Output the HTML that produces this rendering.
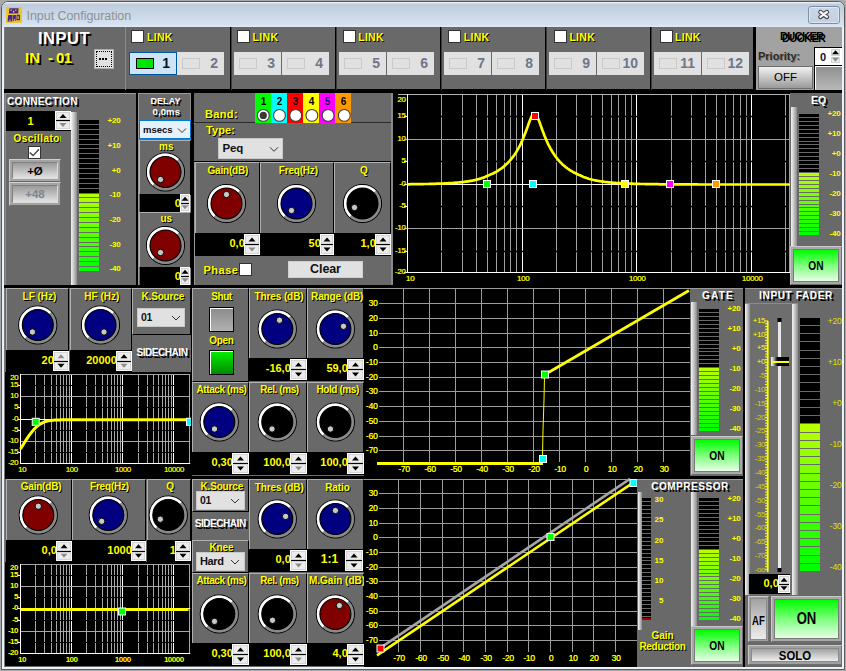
<!DOCTYPE html><html><head><meta charset="utf-8"><style>
*{margin:0;padding:0}
html,body{width:846px;height:671px;overflow:hidden;background:#a9a9a9}
div{position:absolute;box-sizing:border-box}
svg{position:absolute}
</style></head><body><div style="left:1px;top:1px;width:844px;height:669px;background:#eaf2fb;border:1px solid #5a5a5a;border-radius:7px 7px 0 0"></div>
<div style="left:2px;top:2px;width:842px;height:25px;background:linear-gradient(180deg,#e6edf5 0%,#e6edf5 4%,#bdcbdb 8%,#c4d2e1 30%,#d6e2ef 92%,#e2ecf7 100%);border-radius:6px 6px 0 0"></div>
<div style="left:6px;top:7px;width:16px;height:16px;background:#e9c53a"></div>
<svg style="left:0;top:0" width="30" height="30"><g fill="#4a2494"><path d="M9.5,8.2 L18.6,8.2 L18.2,13.6 L8.8,13.6 Z"/><path d="M8.2,15 L12.6,15 L12.2,21.4 L7.6,21.4 Z"/><path d="M13.2,15 L16,15 L15.6,21 L12.8,21 Z"/><path d="M16.6,14.8 L20,14.8 L20,20.2 L16.4,20.2 Z"/></g><g fill="#e9c53a"><rect x="10.5" y="9.5" width="1.6" height="1.2"/><rect x="13" y="10.8" width="1.4" height="1.8"/><rect x="15" y="9.6" width="1.6" height="1"/><rect x="17.6" y="16.2" width="1.2" height="2.8"/><rect x="9.5" y="19.5" width="1" height="2"/><rect x="13.8" y="19" width="1" height="2"/></g></svg>
<div style="left:26.5px;top:7.87px;height:16.5px;font:normal 12.5px/16.5px 'Liberation Sans', sans-serif;color:#8d9098;white-space:nowrap;letter-spacing:-0.05px">Input Configuration</div>
<div style="left:808px;top:6px;width:32px;height:18px;border:1px solid #7f8ea8;border-radius:3px;background:linear-gradient(180deg,#cbd7e6,#c2d0e0);box-shadow:inset 0 0 0 1px rgba(255,255,255,0.45)"></div>
<svg style="left:808px;top:6px" width="32" height="18"><path d="M12.4,6 L18.9,10.9 M18.9,6 L12.4,10.9" stroke="#3a3e48" stroke-width="4.4" stroke-linecap="round"/><path d="M12.4,6 L18.9,10.9 M18.9,6 L12.4,10.9" stroke="#f6f6f6" stroke-width="2.4" stroke-linecap="round"/></svg>
<div style="left:4px;top:27px;width:838px;height:640px;background:#696969"></div>
<div style="left:4px;top:27px;width:1px;height:640px;background:#7a7a7a"></div>
<div style="left:2px;top:667px;width:842px;height:2px;background:#eaf2fb"></div>
<div style="left:4px;top:89px;width:838px;height:4px;background:#000"></div>
<div style="left:38px;top:28.35px;height:20.5px;font:bold 16.5px/20.5px 'Liberation Sans', sans-serif;color:#fff;white-space:nowrap;text-shadow:2px 2px 0 #000;letter-spacing:0.5px">INPUT</div>
<div style="left:25px;top:48.04px;height:19px;font:bold 15px/19px 'Liberation Sans', sans-serif;color:#ffff00;white-space:nowrap;text-shadow:2px 2px 0 #000;">IN</div>
<div style="left:48px;top:48.04px;height:19px;font:bold 15px/19px 'Liberation Sans', sans-serif;color:#ffff00;white-space:nowrap;text-shadow:2px 2px 0 #000;letter-spacing:-0.6px">- 01</div>
<div style="left:94px;top:49px;width:20px;height:20px;background:#e1e1e1;border:1px solid #adadad"></div>
<div style="left:96px;top:51px;width:16px;height:16px;border:1px dotted #000"></div>
<svg style="left:94px;top:49px" width="20" height="20"><rect x="5" y="9" width="2" height="2" fill="#000"/><rect x="8" y="9" width="2" height="2" fill="#000"/><rect x="11" y="9" width="2" height="2" fill="#000"/></svg>
<div style="left:125px;top:27px;width:1px;height:63px;background:#8a8a8a"></div>
<div style="left:131px;top:30px;width:13px;height:13px;background:#fff;border:1px solid #333"></div>
<div style="left:147.0px;top:29.63px;height:14.5px;font:bold 10.5px/14.5px 'Liberation Sans', sans-serif;color:#ffff00;white-space:nowrap;text-shadow:1px 1px 0 #000;letter-spacing:0.3px">LINK</div>
<div style="left:129px;top:52px;width:48px;height:23px;background:#cce4f7;border:1px solid #005499"></div>
<div style="left:136px;top:58px;width:18px;height:11px;background:#00e600;border:1px solid #000"></div>
<div style="left:-30px;width:200px;text-align:right;top:54.17px;height:18px;font:bold 14px/18px 'Liberation Sans', sans-serif;color:#10101e;white-space:nowrap;">1</div>
<div style="left:177px;top:52px;width:47px;height:23px;background:#e1e1e1"></div>
<div style="left:182px;top:58px;width:18px;height:11px;border:1px solid #c9c9c9"></div>
<div style="left:18px;width:200px;text-align:right;top:54.17px;height:18px;font:bold 14px/18px 'Liberation Sans', sans-serif;color:#6e7788;white-space:nowrap;">2</div>
<div style="left:230px;top:27px;width:1px;height:63px;background:#000"></div>
<div style="left:231px;top:27px;width:1px;height:63px;background:#3a3a3a"></div>
<div style="left:237px;top:30px;width:13px;height:13px;background:#fff;border:1px solid #333"></div>
<div style="left:252.6px;top:29.63px;height:14.5px;font:bold 10.5px/14.5px 'Liberation Sans', sans-serif;color:#ffff00;white-space:nowrap;text-shadow:1px 1px 0 #000;letter-spacing:0.3px">LINK</div>
<div style="left:234px;top:52px;width:47px;height:23px;background:#e1e1e1"></div>
<div style="left:239px;top:58px;width:18px;height:11px;border:1px solid #c9c9c9"></div>
<div style="left:75px;width:200px;text-align:right;top:54.17px;height:18px;font:bold 14px/18px 'Liberation Sans', sans-serif;color:#6e7788;white-space:nowrap;">3</div>
<div style="left:282px;top:52px;width:47px;height:23px;background:#e1e1e1"></div>
<div style="left:287px;top:58px;width:18px;height:11px;border:1px solid #c9c9c9"></div>
<div style="left:123px;width:200px;text-align:right;top:54.17px;height:18px;font:bold 14px/18px 'Liberation Sans', sans-serif;color:#6e7788;white-space:nowrap;">4</div>
<div style="left:335px;top:27px;width:1px;height:63px;background:#000"></div>
<div style="left:336px;top:27px;width:1px;height:63px;background:#3a3a3a"></div>
<div style="left:343px;top:30px;width:13px;height:13px;background:#fff;border:1px solid #333"></div>
<div style="left:358.2px;top:29.63px;height:14.5px;font:bold 10.5px/14.5px 'Liberation Sans', sans-serif;color:#ffff00;white-space:nowrap;text-shadow:1px 1px 0 #000;letter-spacing:0.3px">LINK</div>
<div style="left:339px;top:52px;width:47px;height:23px;background:#e1e1e1"></div>
<div style="left:344px;top:58px;width:18px;height:11px;border:1px solid #c9c9c9"></div>
<div style="left:180px;width:200px;text-align:right;top:54.17px;height:18px;font:bold 14px/18px 'Liberation Sans', sans-serif;color:#6e7788;white-space:nowrap;">5</div>
<div style="left:387px;top:52px;width:47px;height:23px;background:#e1e1e1"></div>
<div style="left:392px;top:58px;width:18px;height:11px;border:1px solid #c9c9c9"></div>
<div style="left:228px;width:200px;text-align:right;top:54.17px;height:18px;font:bold 14px/18px 'Liberation Sans', sans-serif;color:#6e7788;white-space:nowrap;">6</div>
<div style="left:440px;top:27px;width:1px;height:63px;background:#000"></div>
<div style="left:441px;top:27px;width:1px;height:63px;background:#3a3a3a"></div>
<div style="left:448px;top:30px;width:13px;height:13px;background:#fff;border:1px solid #333"></div>
<div style="left:463.79999999999995px;top:29.63px;height:14.5px;font:bold 10.5px/14.5px 'Liberation Sans', sans-serif;color:#ffff00;white-space:nowrap;text-shadow:1px 1px 0 #000;letter-spacing:0.3px">LINK</div>
<div style="left:444px;top:52px;width:47px;height:23px;background:#e1e1e1"></div>
<div style="left:449px;top:58px;width:18px;height:11px;border:1px solid #c9c9c9"></div>
<div style="left:285px;width:200px;text-align:right;top:54.17px;height:18px;font:bold 14px/18px 'Liberation Sans', sans-serif;color:#6e7788;white-space:nowrap;">7</div>
<div style="left:492px;top:52px;width:47px;height:23px;background:#e1e1e1"></div>
<div style="left:497px;top:58px;width:18px;height:11px;border:1px solid #c9c9c9"></div>
<div style="left:333px;width:200px;text-align:right;top:54.17px;height:18px;font:bold 14px/18px 'Liberation Sans', sans-serif;color:#6e7788;white-space:nowrap;">8</div>
<div style="left:545px;top:27px;width:1px;height:63px;background:#000"></div>
<div style="left:546px;top:27px;width:1px;height:63px;background:#3a3a3a"></div>
<div style="left:554px;top:30px;width:13px;height:13px;background:#fff;border:1px solid #333"></div>
<div style="left:569.4px;top:29.63px;height:14.5px;font:bold 10.5px/14.5px 'Liberation Sans', sans-serif;color:#ffff00;white-space:nowrap;text-shadow:1px 1px 0 #000;letter-spacing:0.3px">LINK</div>
<div style="left:549px;top:52px;width:47px;height:23px;background:#e1e1e1"></div>
<div style="left:554px;top:58px;width:18px;height:11px;border:1px solid #c9c9c9"></div>
<div style="left:390px;width:200px;text-align:right;top:54.17px;height:18px;font:bold 14px/18px 'Liberation Sans', sans-serif;color:#6e7788;white-space:nowrap;">9</div>
<div style="left:597px;top:52px;width:47px;height:23px;background:#e1e1e1"></div>
<div style="left:602px;top:58px;width:18px;height:11px;border:1px solid #c9c9c9"></div>
<div style="left:438px;width:200px;text-align:right;top:54.17px;height:18px;font:bold 14px/18px 'Liberation Sans', sans-serif;color:#6e7788;white-space:nowrap;">10</div>
<div style="left:650px;top:27px;width:1px;height:63px;background:#000"></div>
<div style="left:651px;top:27px;width:1px;height:63px;background:#3a3a3a"></div>
<div style="left:660px;top:30px;width:13px;height:13px;background:#fff;border:1px solid #333"></div>
<div style="left:675.0px;top:29.63px;height:14.5px;font:bold 10.5px/14.5px 'Liberation Sans', sans-serif;color:#ffff00;white-space:nowrap;text-shadow:1px 1px 0 #000;letter-spacing:0.3px">LINK</div>
<div style="left:654px;top:52px;width:47px;height:23px;background:#e1e1e1"></div>
<div style="left:659px;top:58px;width:18px;height:11px;border:1px solid #c9c9c9"></div>
<div style="left:495px;width:200px;text-align:right;top:54.17px;height:18px;font:bold 14px/18px 'Liberation Sans', sans-serif;color:#6e7788;white-space:nowrap;">11</div>
<div style="left:702px;top:52px;width:47px;height:23px;background:#e1e1e1"></div>
<div style="left:707px;top:58px;width:18px;height:11px;border:1px solid #c9c9c9"></div>
<div style="left:543px;width:200px;text-align:right;top:54.17px;height:18px;font:bold 14px/18px 'Liberation Sans', sans-serif;color:#6e7788;white-space:nowrap;">12</div>
<div style="left:753px;top:27px;width:3px;height:63px;background:#000"></div>
<div style="left:756px;top:27px;width:86px;height:63px;background:#a2a2a2"></div>
<div style="left:780px;top:28.56px;height:15px;font:bold 11px/15px 'Liberation Sans', sans-serif;color:#000;white-space:nowrap;text-shadow:2px 2px 0 #000;letter-spacing:-0.6px">DUCKER</div>
<div style="left:758px;top:49.06px;height:15px;font:bold 11px/15px 'Liberation Sans', sans-serif;color:#2a2a2a;white-space:nowrap;text-shadow:1px 1px 0 rgba(0,0,0,0.25);">Priority:</div>
<div style="left:814px;top:47px;width:28px;height:18px;background:#fff;border-top:1px solid #000;border-left:1px solid #000"></div>
<div style="left:820px;top:50.06px;height:15px;font:bold 11px/15px 'Liberation Sans', sans-serif;color:#101030;white-space:nowrap;">0</div>
<div style="left:830px;top:48px;width:11px;height:16px;background:#fff"></div>
<div style="left:831px;top:49.0px;width:9px;height:6.5px;background:#ececec;border:1px solid #d4d4d4"></div>
<svg style="position:absolute;left:0;top:0;overflow:visible" width="1" height="1"><polygon points="832.0,54.25 839.0,54.25 835.5,50.25" fill="#000"/></svg>
<div style="left:831px;top:56.5px;width:9px;height:6.5px;background:#ececec;border:1px solid #d4d4d4"></div>
<svg style="position:absolute;left:0;top:0;overflow:visible" width="1" height="1"><polygon points="832.0,57.75 839.0,57.75 835.5,61.75" fill="#8c8c8c"/></svg>
<div style="left:758px;top:66px;width:55px;height:23px;background:linear-gradient(180deg,#f2f2f2,#9a9a9a);border:1px solid #6e6e6e"></div>
<div style="left:760.5px;width:50px;text-align:center;top:69.8px;height:15.5px;font:normal 11.5px/15.5px 'Liberation Sans', sans-serif;color:#000;white-space:nowrap;">OFF</div>
<div style="left:814px;top:65px;width:28px;height:25px;background:linear-gradient(180deg,#8e8e8e,#b8b8b8);border-top:1px solid #000;border-left:1px solid #000;box-shadow:inset 1px 1px 0 #fff"></div>
<div style="left:5px;top:93px;width:131px;height:192px;background:#696969;border-top:1px solid #9a9a9a;border-left:1px solid #8a8a8a"></div>
<div style="left:7px;top:95.0px;height:14px;font:bold 10px/14px 'Liberation Sans', sans-serif;color:#fff;white-space:nowrap;text-shadow:2px 2px 0 #000;letter-spacing:0.35px">CONNECTION</div>
<div style="left:6px;top:111px;width:49px;height:20px;background:#000"></div>
<div style="left:55px;top:111px;width:16px;height:20px;background:#000"></div>
<div style="left:20.5px;width:20px;text-align:center;top:113.56px;height:15px;font:bold 11px/15px 'Liberation Sans', sans-serif;color:#ffff00;white-space:nowrap;">1</div>
<div style="left:55px;top:111px;width:16px;height:19px;background:#fff"></div>
<div style="left:56px;top:112.0px;width:14px;height:8.0px;background:#ececec;border:1px solid #d4d4d4"></div>
<svg style="position:absolute;left:0;top:0;overflow:visible" width="1" height="1"><polygon points="59.5,118.0 66.5,118.0 63.0,114.0" fill="#000"/></svg>
<div style="left:56px;top:121.0px;width:14px;height:8.0px;background:#ececec;border:1px solid #d4d4d4"></div>
<svg style="position:absolute;left:0;top:0;overflow:visible" width="1" height="1"><polygon points="59.5,123.0 66.5,123.0 63.0,127.0" fill="#8c8c8c"/></svg>
<div style="left:56px;top:120.0px;width:14px;height:1px;background:#000"></div>
<div style="left:71px;top:112px;width:6px;height:173px;background:linear-gradient(90deg,#f4f4f4 0%,#d8d8d8 30%,#8a8a8a 100%)"></div>
<div style="left:79px;top:120px;width:20px;height:4px;background:#000"></div>
<div style="left:79px;top:125px;width:20px;height:4px;background:#000"></div>
<div style="left:79px;top:130px;width:20px;height:4px;background:#000"></div>
<div style="left:79px;top:135px;width:20px;height:4px;background:#000"></div>
<div style="left:79px;top:140px;width:20px;height:4px;background:#000"></div>
<div style="left:79px;top:145px;width:20px;height:3px;background:#000"></div>
<div style="left:79px;top:149px;width:20px;height:4px;background:#000"></div>
<div style="left:79px;top:154px;width:20px;height:4px;background:#000"></div>
<div style="left:79px;top:159px;width:20px;height:4px;background:#000"></div>
<div style="left:79px;top:164px;width:20px;height:4px;background:#000"></div>
<div style="left:79px;top:169px;width:20px;height:4px;background:#000"></div>
<div style="left:79px;top:174px;width:20px;height:4px;background:#000"></div>
<div style="left:79px;top:179px;width:20px;height:4px;background:#000"></div>
<div style="left:79px;top:184px;width:20px;height:4px;background:#000"></div>
<div style="left:79px;top:189px;width:20px;height:4px;background:#000"></div>
<div style="left:79px;top:194px;width:20px;height:3px;background:rgb(184,255,0)"></div>
<div style="left:79px;top:198px;width:20px;height:4px;background:rgb(171,255,0)"></div>
<div style="left:79px;top:203px;width:20px;height:4px;background:rgb(159,255,0)"></div>
<div style="left:79px;top:208px;width:20px;height:4px;background:rgb(147,255,0)"></div>
<div style="left:79px;top:213px;width:20px;height:4px;background:rgb(134,255,0)"></div>
<div style="left:79px;top:218px;width:20px;height:4px;background:rgb(122,255,0)"></div>
<div style="left:79px;top:223px;width:20px;height:4px;background:rgb(110,255,0)"></div>
<div style="left:79px;top:228px;width:20px;height:4px;background:rgb(98,255,0)"></div>
<div style="left:79px;top:233px;width:20px;height:4px;background:rgb(85,255,0)"></div>
<div style="left:79px;top:238px;width:20px;height:4px;background:rgb(73,255,0)"></div>
<div style="left:79px;top:243px;width:20px;height:3px;background:rgb(61,255,0)"></div>
<div style="left:79px;top:247px;width:20px;height:4px;background:rgb(49,255,0)"></div>
<div style="left:79px;top:252px;width:20px;height:4px;background:rgb(36,255,0)"></div>
<div style="left:79px;top:257px;width:20px;height:4px;background:rgb(24,255,0)"></div>
<div style="left:79px;top:262px;width:20px;height:4px;background:rgb(12,255,0)"></div>
<div style="left:79px;top:267px;width:20px;height:4px;background:rgb(0,255,0)"></div>
<div style="left:-79.5px;width:200px;text-align:right;top:115.25999999999999px;height:12px;font:bold 8px/12px 'Liberation Sans', sans-serif;color:#ffff00;white-space:nowrap;letter-spacing:-0.2px">+20</div>
<div style="left:-79.5px;width:200px;text-align:right;top:139.96px;height:12px;font:bold 8px/12px 'Liberation Sans', sans-serif;color:#ffff00;white-space:nowrap;letter-spacing:-0.2px">+10</div>
<div style="left:-79.5px;width:200px;text-align:right;top:164.66px;height:12px;font:bold 8px/12px 'Liberation Sans', sans-serif;color:#ffff00;white-space:nowrap;letter-spacing:-0.2px">+0</div>
<div style="left:-79.5px;width:200px;text-align:right;top:189.35999999999999px;height:12px;font:bold 8px/12px 'Liberation Sans', sans-serif;color:#ffff00;white-space:nowrap;letter-spacing:-0.2px">-10</div>
<div style="left:-79.5px;width:200px;text-align:right;top:214.06px;height:12px;font:bold 8px/12px 'Liberation Sans', sans-serif;color:#ffff00;white-space:nowrap;letter-spacing:-0.2px">-20</div>
<div style="left:-79.5px;width:200px;text-align:right;top:238.76000000000002px;height:12px;font:bold 8px/12px 'Liberation Sans', sans-serif;color:#ffff00;white-space:nowrap;letter-spacing:-0.2px">-30</div>
<div style="left:-79.5px;width:200px;text-align:right;top:263.46px;height:12px;font:bold 8px/12px 'Liberation Sans', sans-serif;color:#ffff00;white-space:nowrap;letter-spacing:-0.2px">-40</div>
<div style="left:13px;top:131px;width:48px;height:15px;overflow:hidden">
<div style="left:0.5px;top:1.2000000000000002px;height:14px;font:bold 10px/14px 'Liberation Sans', sans-serif;color:#ffff00;white-space:nowrap;text-shadow:1px 1px 0 #000;letter-spacing:0.45px">Oscillator</div>
</div>
<div style="left:28px;top:146px;width:13px;height:13px;background:#fff;border:1px solid #333"></div>
<svg style="left:28px;top:146px" width="13" height="13"><path d="M1.8,6.4 L5.1,9.6 L11,3.2" stroke="#444" stroke-width="1.4" fill="none"/></svg>
<div style="left:9px;top:159px;width:52px;height:23px;background:#a4a4a4;border:1px solid #cfcfcf;border-right-color:#6a6a6a;border-bottom-color:#6a6a6a"></div>
<div style="left:12px;top:162px;width:46px;height:17px;background:linear-gradient(180deg,#9a9a9a,#e2e2e2);border:1px solid #808080;border-right-color:#dadada;border-bottom-color:#dadada"></div>
<div style="left:-1.0px;width:72px;text-align:center;top:163.5px;height:15.5px;font:bold 11.5px/15.5px 'Liberation Sans', sans-serif;color:#000;white-space:nowrap;letter-spacing:0px">+&Oslash;</div>
<div style="left:9px;top:182px;width:52px;height:24px;background:#a4a4a4;border:1px solid #cfcfcf;border-right-color:#6a6a6a;border-bottom-color:#6a6a6a"></div>
<div style="left:12px;top:185px;width:46px;height:18px;background:linear-gradient(180deg,#9a9a9a,#e2e2e2);border:1px solid #808080;border-right-color:#dadada;border-bottom-color:#dadada"></div>
<div style="left:-1.0px;width:72px;text-align:center;top:186.7px;height:15.5px;font:bold 11.5px/15.5px 'Liberation Sans', sans-serif;color:#7c8490;white-space:nowrap;letter-spacing:0px">+48</div>
<div style="left:136px;top:93px;width:2px;height:192px;background:#000"></div>
<div style="left:138px;top:93px;width:53px;height:192px;background:#696969;border-top:1px solid #9a9a9a;border-left:1px solid #9a9a9a;border-right:1px solid #8a8a8a"></div>
<div style="left:191px;top:93px;width:3px;height:192px;background:#000"></div>
<div style="left:140.5px;width:50px;text-align:center;top:94.83px;height:13px;font:bold 9px/13px 'Liberation Sans', sans-serif;color:#fff;white-space:nowrap;text-shadow:1.5px 1.5px 0 #000;letter-spacing:0.1px">DELAY</div>
<div style="left:141.3px;width:50px;text-align:center;top:105.26px;height:13.5px;font:bold 9.5px/13.5px 'Liberation Sans', sans-serif;color:#fff;white-space:nowrap;text-shadow:1.5px 1.5px 0 #000;letter-spacing:0.1px">0,0ms</div>
<div style="left:139px;top:120px;width:52px;height:19px;background:#e5f1fb;border:1px solid #0078d7"></div>
<div style="left:143px;top:123.26px;height:13.5px;font:bold 9.5px/13.5px 'Liberation Sans', sans-serif;color:#0a0a20;white-space:nowrap;letter-spacing:0px">msecs</div>
<svg style="left:139px;top:120px" width="52" height="19"><path d="M39,8.5 L43,12.5 L47,8.5" stroke="#333" stroke-width="1" fill="none"/></svg>
<div style="left:139px;top:140px;width:52px;height:55px;background:#696969;border-top:1px solid #b0b0b0;border-left:1px solid #b0b0b0;border-right:1px solid #000;border-bottom:1px solid #000"></div>
<div style="left:146.3px;width:40px;text-align:center;top:139.5px;height:14px;font:bold 10px/14px 'Liberation Sans', sans-serif;color:#ffff00;white-space:nowrap;text-shadow:1px 1px 0 #000;">ms</div>
<svg style="position:absolute;left:0;top:0;overflow:visible" width="1" height="1"><circle cx="165.5" cy="172" r="19" fill="none" stroke="#000" stroke-width="1.2"/><circle cx="165.5" cy="172" r="17.1" fill="none" stroke="#8a8a8a" stroke-width="3"/><path d="M153.62,184.30 A17.1,17.1 0 1 1 177.80,160.12" fill="none" stroke="#fff" stroke-width="3"/><circle cx="165.5" cy="172" r="15.5" fill="#800000" stroke="#000" stroke-width="1.1"/><circle cx="160.5" cy="179.5" r="3.2" fill="#c8c8c8" stroke="#000" stroke-width="1"/></svg>
<div style="left:140px;top:194px;width:50px;height:18px;background:#000"></div>
<div style="left:-19.19999999999999px;width:200px;text-align:right;top:195.56px;height:15px;font:bold 11px/15px 'Liberation Sans', sans-serif;color:#ffff00;white-space:nowrap;letter-spacing:0px">0</div>
<div style="left:180px;top:194px;width:10px;height:18px;background:#fff"></div>
<div style="left:181px;top:195.0px;width:8px;height:7.5px;background:#ececec;border:1px solid #d4d4d4"></div>
<svg style="position:absolute;left:0;top:0;overflow:visible" width="1" height="1"><polygon points="181.5,200.75 188.5,200.75 185.0,196.75" fill="#000"/></svg>
<div style="left:181px;top:203.5px;width:8px;height:7.5px;background:#ececec;border:1px solid #d4d4d4"></div>
<svg style="position:absolute;left:0;top:0;overflow:visible" width="1" height="1"><polygon points="181.5,205.25 188.5,205.25 185.0,209.25" fill="#8c8c8c"/></svg>
<div style="left:181px;top:202.5px;width:8px;height:1px;background:#000"></div>
<div style="left:139px;top:212px;width:52px;height:56px;background:#696969;border-top:1px solid #b0b0b0;border-left:1px solid #b0b0b0;border-right:1px solid #000;border-bottom:1px solid #000"></div>
<div style="left:146.3px;width:40px;text-align:center;top:211.7px;height:14px;font:bold 10px/14px 'Liberation Sans', sans-serif;color:#ffff00;white-space:nowrap;text-shadow:1px 1px 0 #000;">us</div>
<svg style="position:absolute;left:0;top:0;overflow:visible" width="1" height="1"><circle cx="165.5" cy="245.5" r="19" fill="none" stroke="#000" stroke-width="1.2"/><circle cx="165.5" cy="245.5" r="17.1" fill="none" stroke="#8a8a8a" stroke-width="3"/><path d="M153.62,257.80 A17.1,17.1 0 1 1 177.80,233.62" fill="none" stroke="#fff" stroke-width="3"/><circle cx="165.5" cy="245.5" r="15.5" fill="#800000" stroke="#000" stroke-width="1.1"/><circle cx="160.5" cy="252.5" r="3.2" fill="#c8c8c8" stroke="#000" stroke-width="1"/></svg>
<div style="left:140px;top:267px;width:50px;height:18px;background:#000"></div>
<div style="left:-19.19999999999999px;width:200px;text-align:right;top:268.56px;height:15px;font:bold 11px/15px 'Liberation Sans', sans-serif;color:#ffff00;white-space:nowrap;letter-spacing:0px">0</div>
<div style="left:180px;top:267px;width:10px;height:18px;background:#fff"></div>
<div style="left:181px;top:268.0px;width:8px;height:7.5px;background:#ececec;border:1px solid #d4d4d4"></div>
<svg style="position:absolute;left:0;top:0;overflow:visible" width="1" height="1"><polygon points="181.5,273.75 188.5,273.75 185.0,269.75" fill="#000"/></svg>
<div style="left:181px;top:276.5px;width:8px;height:7.5px;background:#ececec;border:1px solid #d4d4d4"></div>
<svg style="position:absolute;left:0;top:0;overflow:visible" width="1" height="1"><polygon points="181.5,278.25 188.5,278.25 185.0,282.25" fill="#8c8c8c"/></svg>
<div style="left:181px;top:275.5px;width:8px;height:1px;background:#000"></div>
<div style="left:194px;top:93px;width:198px;height:192px;background:#696969;border-left:1px solid #9a9a9a;border-right:1px solid #8a8a8a"></div>
<div style="left:194px;top:93px;width:197px;height:30px;background:#696969;border-bottom:1px solid #2a2a2a"></div>
<div style="left:205px;top:107.06px;height:15px;font:bold 11px/15px 'Liberation Sans', sans-serif;color:#ffff00;white-space:nowrap;text-shadow:1px 1px 0 #000;letter-spacing:0.35px">Band:</div>
<div style="left:255px;top:93px;width:16px;height:30px;background:#00ff00"></div>
<div style="left:255.5px;width:16px;text-align:center;top:95.0px;height:14px;font:bold 10px/14px 'Liberation Sans', sans-serif;color:#000;white-space:nowrap;">1</div>
<svg style="left:255px;top:109px" width="18" height="14" overflow="visible"><circle cx="8.30" cy="6.4" r="5.9" fill="#fff" stroke="#404040" stroke-width="1.1"/><circle cx="8.30" cy="6.4" r="3.6" fill="#383838"/></svg>
<div style="left:271px;top:93px;width:16px;height:30px;background:#00ffff"></div>
<div style="left:271.5px;width:16px;text-align:center;top:95.0px;height:14px;font:bold 10px/14px 'Liberation Sans', sans-serif;color:#000;white-space:nowrap;">2</div>
<svg style="left:271px;top:109px" width="18" height="14" overflow="visible"><circle cx="8.50" cy="6.4" r="5.9" fill="#fff" stroke="#404040" stroke-width="1.1"/></svg>
<div style="left:287px;top:93px;width:16px;height:30px;background:#ff0000"></div>
<div style="left:287.5px;width:16px;text-align:center;top:95.0px;height:14px;font:bold 10px/14px 'Liberation Sans', sans-serif;color:#000;white-space:nowrap;">3</div>
<svg style="left:287px;top:109px" width="18" height="14" overflow="visible"><circle cx="8.70" cy="6.4" r="5.9" fill="#fff" stroke="#404040" stroke-width="1.1"/></svg>
<div style="left:303px;top:93px;width:16px;height:30px;background:#ffff00"></div>
<div style="left:303.5px;width:16px;text-align:center;top:95.0px;height:14px;font:bold 10px/14px 'Liberation Sans', sans-serif;color:#000;white-space:nowrap;">4</div>
<svg style="left:303px;top:109px" width="18" height="14" overflow="visible"><circle cx="8.90" cy="6.4" r="5.9" fill="#fff" stroke="#404040" stroke-width="1.1"/></svg>
<div style="left:319px;top:93px;width:16px;height:30px;background:#ff00ff"></div>
<div style="left:319.5px;width:16px;text-align:center;top:95.0px;height:14px;font:bold 10px/14px 'Liberation Sans', sans-serif;color:#10106a;white-space:nowrap;">5</div>
<svg style="left:319px;top:109px" width="18" height="14" overflow="visible"><circle cx="9.10" cy="6.4" r="5.9" fill="#fff" stroke="#404040" stroke-width="1.1"/></svg>
<div style="left:335px;top:93px;width:16px;height:30px;background:#ff9900"></div>
<div style="left:335.5px;width:16px;text-align:center;top:95.0px;height:14px;font:bold 10px/14px 'Liberation Sans', sans-serif;color:#000;white-space:nowrap;">6</div>
<svg style="left:335px;top:109px" width="18" height="14" overflow="visible"><circle cx="9.30" cy="6.4" r="5.9" fill="#fff" stroke="#404040" stroke-width="1.1"/></svg>
<div style="left:194px;top:124px;width:197px;height:38px;background:#696969;border-bottom:1px solid #000"></div>
<div style="left:206px;top:123.06px;height:15px;font:bold 11px/15px 'Liberation Sans', sans-serif;color:#ffff00;white-space:nowrap;text-shadow:1px 1px 0 #000;letter-spacing:0.1px">Type:</div>
<div style="left:218px;top:138px;width:65px;height:21px;background:#e1e1e1;border:1px solid #c9c9c9"></div>
<div style="left:222.5px;top:141.3px;height:15.5px;font:bold 11.5px/15.5px 'Liberation Sans', sans-serif;color:#111;white-space:nowrap;letter-spacing:-0.2px">Peq</div>
<svg style="left:218px;top:138px" width="65" height="21"><path d="M52,9.3 L56,13.3 L60,9.3" stroke="#333" stroke-width="1" fill="none"/></svg>
<div style="left:195px;top:162px;width:65px;height:72px;background:#696969;border-top:1px solid #b0b0b0;border-left:1px solid #b0b0b0;border-right:1px solid #000;border-bottom:1px solid #000"></div>
<div style="left:187.8px;width:80px;text-align:center;top:164.2px;height:14px;font:bold 10px/14px 'Liberation Sans', sans-serif;color:#ffff00;white-space:nowrap;text-shadow:1px 1px 0 #000;letter-spacing:-0.2px">Gain(dB)</div>
<svg style="position:absolute;left:0;top:0;overflow:visible" width="1" height="1"><circle cx="226.5" cy="203.5" r="19" fill="none" stroke="#000" stroke-width="1.2"/><circle cx="226.5" cy="203.5" r="17.1" fill="none" stroke="#8a8a8a" stroke-width="3"/><path d="M214.62,215.80 A17.1,17.1 0 1 1 238.80,191.62" fill="none" stroke="#fff" stroke-width="3"/><circle cx="226.5" cy="203.5" r="15.5" fill="#800000" stroke="#000" stroke-width="1.1"/><circle cx="226.5" cy="194.5" r="3.2" fill="#c8c8c8" stroke="#000" stroke-width="1"/></svg>
<div style="left:195px;top:233px;width:65px;height:23px;background:#000"></div>
<div style="left:44.80000000000001px;width:200px;text-align:right;top:236.06px;height:15px;font:bold 11px/15px 'Liberation Sans', sans-serif;color:#ffff00;white-space:nowrap;letter-spacing:0px">0,0</div>
<div style="left:244px;top:234px;width:16px;height:21px;background:#fff"></div>
<div style="left:245px;top:235.0px;width:14px;height:9.0px;background:#ececec;border:1px solid #d4d4d4"></div>
<svg style="position:absolute;left:0;top:0;overflow:visible" width="1" height="1"><polygon points="248.5,241.5 255.5,241.5 252.0,237.5" fill="#000"/></svg>
<div style="left:245px;top:245.0px;width:14px;height:9.0px;background:#ececec;border:1px solid #d4d4d4"></div>
<svg style="position:absolute;left:0;top:0;overflow:visible" width="1" height="1"><polygon points="248.5,247.5 255.5,247.5 252.0,251.5" fill="#8c8c8c"/></svg>
<div style="left:245px;top:244.0px;width:14px;height:1px;background:#000"></div>
<div style="left:260px;top:162px;width:74px;height:72px;background:#696969;border-top:1px solid #b0b0b0;border-left:1px solid #b0b0b0;border-right:1px solid #000;border-bottom:1px solid #000"></div>
<div style="left:258.3px;width:80px;text-align:center;top:164.2px;height:14px;font:bold 10px/14px 'Liberation Sans', sans-serif;color:#ffff00;white-space:nowrap;text-shadow:1px 1px 0 #000;letter-spacing:-0.2px">Freq(Hz)</div>
<svg style="position:absolute;left:0;top:0;overflow:visible" width="1" height="1"><circle cx="296.5" cy="203.5" r="19" fill="none" stroke="#000" stroke-width="1.2"/><circle cx="296.5" cy="203.5" r="17.1" fill="none" stroke="#8a8a8a" stroke-width="3"/><path d="M284.62,215.80 A17.1,17.1 0 1 1 308.80,191.62" fill="none" stroke="#fff" stroke-width="3"/><circle cx="296.5" cy="203.5" r="15.5" fill="#000080" stroke="#000" stroke-width="1.1"/><circle cx="291.5" cy="210.5" r="3.2" fill="#c8c8c8" stroke="#000" stroke-width="1"/></svg>
<div style="left:260px;top:233px;width:74px;height:23px;background:#000"></div>
<div style="left:120.80000000000001px;width:200px;text-align:right;top:236.06px;height:15px;font:bold 11px/15px 'Liberation Sans', sans-serif;color:#ffff00;white-space:nowrap;letter-spacing:0px">50</div>
<div style="left:320px;top:234px;width:14px;height:21px;background:#fff"></div>
<div style="left:321px;top:235.0px;width:12px;height:9.0px;background:#ececec;border:1px solid #d4d4d4"></div>
<svg style="position:absolute;left:0;top:0;overflow:visible" width="1" height="1"><polygon points="323.5,241.5 330.5,241.5 327.0,237.5" fill="#000"/></svg>
<div style="left:321px;top:245.0px;width:12px;height:9.0px;background:#ececec;border:1px solid #d4d4d4"></div>
<svg style="position:absolute;left:0;top:0;overflow:visible" width="1" height="1"><polygon points="323.5,247.5 330.5,247.5 327.0,251.5" fill="#000"/></svg>
<div style="left:321px;top:244.0px;width:12px;height:1px;background:#000"></div>
<div style="left:334px;top:162px;width:57px;height:72px;background:#696969;border-top:1px solid #b0b0b0;border-left:1px solid #b0b0b0;border-right:1px solid #000;border-bottom:1px solid #000"></div>
<div style="left:323.8px;width:80px;text-align:center;top:164.2px;height:14px;font:bold 10px/14px 'Liberation Sans', sans-serif;color:#ffff00;white-space:nowrap;text-shadow:1px 1px 0 #000;letter-spacing:-0.2px">Q</div>
<svg style="position:absolute;left:0;top:0;overflow:visible" width="1" height="1"><circle cx="362.5" cy="203.5" r="19" fill="none" stroke="#000" stroke-width="1.2"/><circle cx="362.5" cy="203.5" r="17.1" fill="none" stroke="#8a8a8a" stroke-width="3"/><path d="M350.62,215.80 A17.1,17.1 0 1 1 374.80,191.62" fill="none" stroke="#fff" stroke-width="3"/><circle cx="362.5" cy="203.5" r="15.5" fill="#000" stroke="#000" stroke-width="1.1"/><circle cx="354.5" cy="207.5" r="3.2" fill="#c8c8c8" stroke="#000" stroke-width="1"/></svg>
<div style="left:334px;top:233px;width:57px;height:23px;background:#000"></div>
<div style="left:175.8px;width:200px;text-align:right;top:236.06px;height:15px;font:bold 11px/15px 'Liberation Sans', sans-serif;color:#ffff00;white-space:nowrap;letter-spacing:0px">1,0</div>
<div style="left:375px;top:234px;width:16px;height:21px;background:#fff"></div>
<div style="left:376px;top:235.0px;width:14px;height:9.0px;background:#ececec;border:1px solid #d4d4d4"></div>
<svg style="position:absolute;left:0;top:0;overflow:visible" width="1" height="1"><polygon points="379.5,241.5 386.5,241.5 383.0,237.5" fill="#000"/></svg>
<div style="left:376px;top:245.0px;width:14px;height:9.0px;background:#ececec;border:1px solid #d4d4d4"></div>
<svg style="position:absolute;left:0;top:0;overflow:visible" width="1" height="1"><polygon points="379.5,247.5 386.5,247.5 383.0,251.5" fill="#000"/></svg>
<div style="left:376px;top:244.0px;width:14px;height:1px;background:#000"></div>
<div style="left:203.5px;top:262.56px;height:15px;font:bold 11px/15px 'Liberation Sans', sans-serif;color:#ffff00;white-space:nowrap;text-shadow:1px 1px 0 #000;letter-spacing:0.5px">Phase</div>
<div style="left:239px;top:263px;width:13px;height:13px;background:#fff;border:1px solid #333"></div>
<div style="left:288px;top:261px;width:75px;height:17px;background:#e1e1e1;border:1px solid #d0d0d0"></div>
<div style="left:290.5px;width:70px;text-align:center;top:261.17px;height:16.5px;font:bold 12.5px/16.5px 'Liberation Sans', sans-serif;color:#111;white-space:nowrap;letter-spacing:-0.1px">Clear</div>
<div style="left:392px;top:93px;width:398px;height:192px;background:#000;border-left:1px solid #8a8a8a"></div>
<svg style="left:0;top:0" width="846" height="671"><line x1="407.5" y1="94" x2="407.5" y2="273" stroke="#fff" stroke-width="1"/><line x1="441.5" y1="94" x2="441.5" y2="273" stroke="#a0a0a0" stroke-width="1"/><line x1="462.5" y1="94" x2="462.5" y2="273" stroke="#a0a0a0" stroke-width="1"/><line x1="476.5" y1="94" x2="476.5" y2="273" stroke="#a0a0a0" stroke-width="1"/><line x1="487.5" y1="94" x2="487.5" y2="273" stroke="#a0a0a0" stroke-width="1"/><line x1="496.5" y1="94" x2="496.5" y2="273" stroke="#a0a0a0" stroke-width="1"/><line x1="504.5" y1="94" x2="504.5" y2="273" stroke="#a0a0a0" stroke-width="1"/><line x1="510.5" y1="94" x2="510.5" y2="273" stroke="#a0a0a0" stroke-width="1"/><line x1="516.5" y1="94" x2="516.5" y2="273" stroke="#a0a0a0" stroke-width="1"/><line x1="522.5" y1="94" x2="522.5" y2="273" stroke="#fff" stroke-width="1"/><line x1="556.5" y1="94" x2="556.5" y2="273" stroke="#a0a0a0" stroke-width="1"/><line x1="576.5" y1="94" x2="576.5" y2="273" stroke="#a0a0a0" stroke-width="1"/><line x1="591.5" y1="94" x2="591.5" y2="273" stroke="#a0a0a0" stroke-width="1"/><line x1="602.5" y1="94" x2="602.5" y2="273" stroke="#a0a0a0" stroke-width="1"/><line x1="611.5" y1="94" x2="611.5" y2="273" stroke="#a0a0a0" stroke-width="1"/><line x1="618.5" y1="94" x2="618.5" y2="273" stroke="#a0a0a0" stroke-width="1"/><line x1="625.5" y1="94" x2="625.5" y2="273" stroke="#a0a0a0" stroke-width="1"/><line x1="631.5" y1="94" x2="631.5" y2="273" stroke="#a0a0a0" stroke-width="1"/><line x1="636.5" y1="94" x2="636.5" y2="273" stroke="#fff" stroke-width="1"/><line x1="671.5" y1="94" x2="671.5" y2="273" stroke="#a0a0a0" stroke-width="1"/><line x1="691.5" y1="94" x2="691.5" y2="273" stroke="#a0a0a0" stroke-width="1"/><line x1="705.5" y1="94" x2="705.5" y2="273" stroke="#a0a0a0" stroke-width="1"/><line x1="716.5" y1="94" x2="716.5" y2="273" stroke="#a0a0a0" stroke-width="1"/><line x1="725.5" y1="94" x2="725.5" y2="273" stroke="#a0a0a0" stroke-width="1"/><line x1="733.5" y1="94" x2="733.5" y2="273" stroke="#a0a0a0" stroke-width="1"/><line x1="740.5" y1="94" x2="740.5" y2="273" stroke="#a0a0a0" stroke-width="1"/><line x1="746.5" y1="94" x2="746.5" y2="273" stroke="#a0a0a0" stroke-width="1"/><line x1="751.5" y1="94" x2="751.5" y2="273" stroke="#fff" stroke-width="1"/><line x1="785.5" y1="94" x2="785.5" y2="273" stroke="#a0a0a0" stroke-width="1"/><line x1="785.5" y1="94" x2="785.5" y2="273" stroke="#a0a0a0" stroke-width="1"/><line x1="789.5" y1="94" x2="789.5" y2="273" stroke="#a0a0a0" stroke-width="1"/><line x1="404" y1="139.5" x2="790" y2="139.5" stroke="#a0a0a0" stroke-width="1"/><line x1="404" y1="228.5" x2="790" y2="228.5" stroke="#a0a0a0" stroke-width="1"/><line x1="398" y1="94.5" x2="790" y2="94.5" stroke="#b4b4b4" stroke-width="1"/><line x1="408" y1="116.5" x2="789" y2="116.5" stroke="#000" stroke-width="1.6"/><line x1="404" y1="116.5" x2="408" y2="116.5" stroke="#fff" stroke-width="1"/><line x1="408" y1="161.5" x2="789" y2="161.5" stroke="#000" stroke-width="1.6"/><line x1="404" y1="161.5" x2="408" y2="161.5" stroke="#fff" stroke-width="1"/><line x1="408" y1="206.5" x2="789" y2="206.5" stroke="#000" stroke-width="1.6"/><line x1="404" y1="206.5" x2="408" y2="206.5" stroke="#fff" stroke-width="1"/><line x1="408" y1="251.5" x2="789" y2="251.5" stroke="#000" stroke-width="1.6"/><line x1="404" y1="251.5" x2="408" y2="251.5" stroke="#fff" stroke-width="1"/><line x1="404" y1="184.5" x2="790" y2="184.5" stroke="#fff" stroke-width="1"/><line x1="404" y1="272.5" x2="790" y2="272.5" stroke="#fff" stroke-width="1"/><line x1="407.5" y1="94" x2="407.5" y2="273" stroke="#fff" stroke-width="1"/><polyline points="407.5,184.3 408.5,184.3 409.5,184.3 410.5,184.2 411.5,184.2 412.5,184.2 413.5,184.2 414.5,184.2 415.5,184.2 416.5,184.2 417.5,184.2 418.5,184.1 419.5,184.1 420.5,184.1 421.5,184.1 422.5,184.1 423.5,184.1 424.5,184.0 425.5,184.0 426.5,184.0 427.5,184.0 428.5,184.0 429.5,183.9 430.5,183.9 431.5,183.9 432.5,183.9 433.5,183.8 434.5,183.8 435.5,183.8 436.5,183.7 437.5,183.7 438.5,183.7 439.5,183.6 440.5,183.6 441.5,183.5 442.5,183.5 443.5,183.5 444.5,183.4 445.5,183.4 446.5,183.3 447.5,183.3 448.5,183.2 449.5,183.2 450.5,183.1 451.5,183.0 452.5,183.0 453.5,182.9 454.5,182.8 455.5,182.7 456.5,182.7 457.5,182.6 458.5,182.5 459.5,182.4 460.5,182.3 461.5,182.2 462.5,182.1 463.5,182.0 464.5,181.8 465.5,181.7 466.5,181.6 467.5,181.4 468.5,181.3 469.5,181.1 470.5,180.9 471.5,180.8 472.5,180.6 473.5,180.4 474.5,180.2 475.5,179.9 476.5,179.7 477.5,179.4 478.5,179.2 479.5,178.9 480.5,178.6 481.5,178.3 482.5,177.9 483.5,177.6 484.5,177.2 485.5,176.8 486.5,176.3 487.5,175.8 488.5,175.4 489.5,175.0 490.5,174.6 491.5,174.1 492.5,173.7 493.5,173.2 494.5,172.7 495.5,172.1 496.5,171.6 497.5,171.0 498.5,170.4 499.5,169.7 500.5,169.0 501.5,168.3 502.5,167.6 503.5,166.8 504.5,165.9 505.5,165.1 506.5,164.1 507.5,163.2 508.5,162.1 509.5,161.1 510.5,159.9 511.5,158.7 512.5,157.4 513.5,156.1 514.5,154.7 515.5,153.2 516.5,151.6 517.5,149.9 518.5,148.2 519.5,146.3 520.5,144.3 521.5,142.2 522.5,140.0 523.5,137.6 524.5,135.1 525.5,132.5 526.5,129.8 527.5,127.1 528.5,124.3 529.5,121.5 530.5,118.9 531.5,116.6 532.5,114.8 533.5,113.6 534.5,113.3 535.5,113.8 536.5,115.1 537.5,117.1 538.5,119.5 539.5,122.1 540.5,124.9 541.5,127.7 542.5,130.5 543.5,133.1 544.5,135.7 545.5,138.1 546.5,140.5 547.5,142.7 548.5,144.8 549.5,146.7 550.5,148.6 551.5,150.3 552.5,152.0 553.5,153.5 554.5,155.0 555.5,156.4 556.5,157.7 557.5,159.0 558.5,160.2 559.5,161.3 560.5,162.4 561.5,163.4 562.5,164.4 563.5,165.3 564.5,166.1 565.5,167.0 566.5,167.7 567.5,168.5 568.5,169.2 569.5,169.9 570.5,170.5 571.5,171.1 572.5,171.7 573.5,172.3 574.5,172.8 575.5,173.3 576.5,173.8 577.5,174.2 578.5,174.7 579.5,175.1 580.5,175.5 581.5,176.0 582.5,176.4 583.5,176.9 584.5,177.3 585.5,177.6 586.5,178.0 587.5,178.3 588.5,178.7 589.5,179.0 590.5,179.2 591.5,179.5 592.5,179.8 593.5,180.0 594.5,180.2 595.5,180.4 596.5,180.6 597.5,180.8 598.5,181.0 599.5,181.1 600.5,181.3 601.5,181.5 602.5,181.6 603.5,181.7 604.5,181.9 605.5,182.0 606.5,182.1 607.5,182.2 608.5,182.3 609.5,182.4 610.5,182.5 611.5,182.6 612.5,182.7 613.5,182.8 614.5,182.8 615.5,182.9 616.5,183.0 617.5,183.0 618.5,183.1 619.5,183.2 620.5,183.2 621.5,183.3 622.5,183.3 623.5,183.4 624.5,183.4 625.5,183.5 626.5,183.5 627.5,183.6 628.5,183.6 629.5,183.6 630.5,183.7 631.5,183.7 632.5,183.7 633.5,183.8 634.5,183.8 635.5,183.8 636.5,183.9 637.5,183.9 638.5,183.9 639.5,183.9 640.5,184.0 641.5,184.0 642.5,184.0 643.5,184.0 644.5,184.0 645.5,184.1 646.5,184.1 647.5,184.1 648.5,184.1 649.5,184.1 650.5,184.1 651.5,184.2 652.5,184.2 653.5,184.2 654.5,184.2 655.5,184.2 656.5,184.2 657.5,184.2 658.5,184.2 659.5,184.3 660.5,184.3 661.5,184.3 662.5,184.3 663.5,184.3 664.5,184.3 665.5,184.3 666.5,184.3 667.5,184.3 668.5,184.3 669.5,184.3 670.5,184.3 671.5,184.4 672.5,184.4 673.5,184.4 674.5,184.4 675.5,184.4 676.5,184.4 677.5,184.4 678.5,184.4 679.5,184.4 680.5,184.4 681.5,184.4 682.5,184.4 683.5,184.4 684.5,184.4 685.5,184.4 686.5,184.4 687.5,184.4 688.5,184.4 689.5,184.4 690.5,184.4 691.5,184.4 692.5,184.4 693.5,184.4 694.5,184.4 695.5,184.4 696.5,184.4 697.5,184.4 698.5,184.5 699.5,184.5 700.5,184.5 701.5,184.5 702.5,184.5 703.5,184.5 704.5,184.5 705.5,184.5 706.5,184.5 707.5,184.5 708.5,184.5 709.5,184.5 710.5,184.5 711.5,184.5 712.5,184.5 713.5,184.5 714.5,184.5 715.5,184.5 716.5,184.5 717.5,184.5 718.5,184.5 719.5,184.5 720.5,184.5 721.5,184.5 722.5,184.5 723.5,184.5 724.5,184.5 725.5,184.5 726.5,184.5 727.5,184.5 728.5,184.5 729.5,184.5 730.5,184.5 731.5,184.5 732.5,184.5 733.5,184.5 734.5,184.5 735.5,184.5 736.5,184.5 737.5,184.5 738.5,184.5 739.5,184.5 740.5,184.5 741.5,184.5 742.5,184.5 743.5,184.5 744.5,184.5 745.5,184.5 746.5,184.5 747.5,184.5 748.5,184.5 749.5,184.5 750.5,184.5 751.5,184.5 752.5,184.5 753.5,184.5 754.5,184.5 755.5,184.5 756.5,184.5 757.5,184.5 758.5,184.5 759.5,184.5 760.5,184.5 761.5,184.5 762.5,184.5 763.5,184.5 764.5,184.5 765.5,184.5 766.5,184.5 767.5,184.5 768.5,184.5 769.5,184.5 770.5,184.5 771.5,184.5 772.5,184.5 773.5,184.5 774.5,184.5 775.5,184.5 776.5,184.5 777.5,184.5 778.5,184.5 779.5,184.5 780.5,184.5 781.5,184.5 782.5,184.5 783.5,184.5 784.5,184.5 785.5,184.5 786.5,184.5 787.5,184.5 788.5,184.5 789.5,184.5" fill="none" stroke="#ffff00" stroke-width="2.7"/><rect x="483.5" y="180.5" width="7" height="7" fill="#00ff00" stroke="#fff" stroke-width="1"/><rect x="529.5" y="180.5" width="7" height="7" fill="#00ffff" stroke="#fff" stroke-width="1"/><rect x="531.5" y="112.5" width="7" height="7" fill="#ff0000" stroke="#fff" stroke-width="1"/><rect x="621.5" y="180.5" width="7" height="7" fill="#ffff00" stroke="#fff" stroke-width="1"/><rect x="666.5" y="180.5" width="7" height="7" fill="#ff00ff" stroke="#fff" stroke-width="1"/><rect x="712.5" y="180.5" width="7" height="7" fill="#ff9900" stroke="#fff" stroke-width="1"/></svg>
<div style="left:205.5px;width:200px;text-align:right;top:94.36px;height:12px;font:normal 8px/12px 'Liberation Sans', sans-serif;color:#f0f000;white-space:nowrap;text-shadow:0.4px 0 0 #e0e000;letter-spacing:-0.3px">20</div>
<div style="left:205.5px;width:200px;text-align:right;top:110.46px;height:12px;font:normal 8px/12px 'Liberation Sans', sans-serif;color:#f0f000;white-space:nowrap;text-shadow:0.4px 0 0 #e0e000;letter-spacing:-0.3px">15</div>
<div style="left:205.5px;width:200px;text-align:right;top:133.46px;height:12px;font:normal 8px/12px 'Liberation Sans', sans-serif;color:#f0f000;white-space:nowrap;text-shadow:0.4px 0 0 #e0e000;letter-spacing:-0.3px">10</div>
<div style="left:205.5px;width:200px;text-align:right;top:155.46px;height:12px;font:normal 8px/12px 'Liberation Sans', sans-serif;color:#f0f000;white-space:nowrap;text-shadow:0.4px 0 0 #e0e000;letter-spacing:-0.3px">5</div>
<div style="left:205.5px;width:200px;text-align:right;top:178.46px;height:12px;font:normal 8px/12px 'Liberation Sans', sans-serif;color:#f0f000;white-space:nowrap;text-shadow:0.4px 0 0 #e0e000;letter-spacing:-0.3px">-0</div>
<div style="left:205.5px;width:200px;text-align:right;top:200.46px;height:12px;font:normal 8px/12px 'Liberation Sans', sans-serif;color:#f0f000;white-space:nowrap;text-shadow:0.4px 0 0 #e0e000;letter-spacing:-0.3px">-5</div>
<div style="left:205.5px;width:200px;text-align:right;top:222.46px;height:12px;font:normal 8px/12px 'Liberation Sans', sans-serif;color:#f0f000;white-space:nowrap;text-shadow:0.4px 0 0 #e0e000;letter-spacing:-0.3px">-10</div>
<div style="left:205.5px;width:200px;text-align:right;top:245.46px;height:12px;font:normal 8px/12px 'Liberation Sans', sans-serif;color:#f0f000;white-space:nowrap;text-shadow:0.4px 0 0 #e0e000;letter-spacing:-0.3px">-15</div>
<div style="left:205.5px;width:200px;text-align:right;top:266.46px;height:12px;font:normal 8px/12px 'Liberation Sans', sans-serif;color:#f0f000;white-space:nowrap;text-shadow:0.4px 0 0 #e0e000;letter-spacing:-0.3px">-20</div>
<div style="left:390.0px;width:40px;text-align:center;top:273.15999999999997px;height:12px;font:normal 8px/12px 'Liberation Sans', sans-serif;color:#f0f000;white-space:nowrap;text-shadow:0.4px 0 0 #e0e000;letter-spacing:-0.3px">10</div>
<div style="left:503.0px;width:40px;text-align:center;top:273.15999999999997px;height:12px;font:normal 8px/12px 'Liberation Sans', sans-serif;color:#f0f000;white-space:nowrap;text-shadow:0.4px 0 0 #e0e000;letter-spacing:-0.3px">100</div>
<div style="left:617.0px;width:40px;text-align:center;top:273.15999999999997px;height:12px;font:normal 8px/12px 'Liberation Sans', sans-serif;color:#f0f000;white-space:nowrap;text-shadow:0.4px 0 0 #e0e000;letter-spacing:-0.3px">1000</div>
<div style="left:732.0px;width:40px;text-align:center;top:273.15999999999997px;height:12px;font:normal 8px/12px 'Liberation Sans', sans-serif;color:#f0f000;white-space:nowrap;text-shadow:0.4px 0 0 #e0e000;letter-spacing:-0.3px">10000</div>
<div style="left:790px;top:93px;width:52px;height:192px;background:#696969"></div>
<div style="left:803.5px;width:30px;text-align:center;top:93.13px;height:14.5px;font:bold 10.5px/14.5px 'Liberation Sans', sans-serif;color:#fff;white-space:nowrap;text-shadow:2px 2px 0 #000;">EQ</div>
<div style="left:791px;top:107px;width:6px;height:139px;background:linear-gradient(90deg,#f4f4f4 0%,#d8d8d8 30%,#8a8a8a 100%)"></div>
<div style="left:799px;top:114px;width:20px;height:3px;background:#000"></div>
<div style="left:799px;top:118px;width:20px;height:3px;background:#000"></div>
<div style="left:799px;top:122px;width:20px;height:3px;background:#000"></div>
<div style="left:799px;top:126px;width:20px;height:3px;background:#000"></div>
<div style="left:799px;top:130px;width:20px;height:3px;background:#000"></div>
<div style="left:799px;top:134px;width:20px;height:3px;background:#000"></div>
<div style="left:799px;top:138px;width:20px;height:3px;background:#000"></div>
<div style="left:799px;top:142px;width:20px;height:2px;background:#000"></div>
<div style="left:799px;top:145px;width:20px;height:3px;background:#000"></div>
<div style="left:799px;top:149px;width:20px;height:3px;background:#000"></div>
<div style="left:799px;top:153px;width:20px;height:3px;background:#000"></div>
<div style="left:799px;top:157px;width:20px;height:3px;background:#000"></div>
<div style="left:799px;top:161px;width:20px;height:3px;background:#000"></div>
<div style="left:799px;top:165px;width:20px;height:3px;background:#000"></div>
<div style="left:799px;top:169px;width:20px;height:3px;background:#000"></div>
<div style="left:799px;top:173px;width:20px;height:3px;background:rgb(184,255,0)"></div>
<div style="left:799px;top:177px;width:20px;height:3px;background:rgb(171,255,0)"></div>
<div style="left:799px;top:181px;width:20px;height:3px;background:rgb(159,255,0)"></div>
<div style="left:799px;top:185px;width:20px;height:3px;background:rgb(147,255,0)"></div>
<div style="left:799px;top:189px;width:20px;height:3px;background:rgb(134,255,0)"></div>
<div style="left:799px;top:193px;width:20px;height:3px;background:rgb(122,255,0)"></div>
<div style="left:799px;top:197px;width:20px;height:3px;background:rgb(110,255,0)"></div>
<div style="left:799px;top:201px;width:20px;height:3px;background:rgb(98,255,0)"></div>
<div style="left:799px;top:205px;width:20px;height:2px;background:rgb(85,255,0)"></div>
<div style="left:799px;top:208px;width:20px;height:3px;background:rgb(73,255,0)"></div>
<div style="left:799px;top:212px;width:20px;height:3px;background:rgb(61,255,0)"></div>
<div style="left:799px;top:216px;width:20px;height:3px;background:rgb(49,255,0)"></div>
<div style="left:799px;top:220px;width:20px;height:3px;background:rgb(36,255,0)"></div>
<div style="left:799px;top:224px;width:20px;height:3px;background:rgb(24,255,0)"></div>
<div style="left:799px;top:228px;width:20px;height:3px;background:rgb(12,255,0)"></div>
<div style="left:799px;top:232px;width:20px;height:3px;background:rgb(0,255,0)"></div>
<div style="left:640.5px;width:200px;text-align:right;top:108.46px;height:12px;font:bold 8px/12px 'Liberation Sans', sans-serif;color:#ffff00;white-space:nowrap;letter-spacing:-0.2px">+20</div>
<div style="left:640.5px;width:200px;text-align:right;top:128.36px;height:12px;font:bold 8px/12px 'Liberation Sans', sans-serif;color:#ffff00;white-space:nowrap;letter-spacing:-0.2px">+10</div>
<div style="left:640.5px;width:200px;text-align:right;top:148.26000000000002px;height:12px;font:bold 8px/12px 'Liberation Sans', sans-serif;color:#ffff00;white-space:nowrap;letter-spacing:-0.2px">+0</div>
<div style="left:640.5px;width:200px;text-align:right;top:168.16px;height:12px;font:bold 8px/12px 'Liberation Sans', sans-serif;color:#ffff00;white-space:nowrap;letter-spacing:-0.2px">-10</div>
<div style="left:640.5px;width:200px;text-align:right;top:188.06px;height:12px;font:bold 8px/12px 'Liberation Sans', sans-serif;color:#ffff00;white-space:nowrap;letter-spacing:-0.2px">-20</div>
<div style="left:640.5px;width:200px;text-align:right;top:207.96px;height:12px;font:bold 8px/12px 'Liberation Sans', sans-serif;color:#ffff00;white-space:nowrap;letter-spacing:-0.2px">-30</div>
<div style="left:640.5px;width:200px;text-align:right;top:227.85999999999999px;height:12px;font:bold 8px/12px 'Liberation Sans', sans-serif;color:#ffff00;white-space:nowrap;letter-spacing:-0.2px">-40</div>
<div style="left:790px;top:246px;width:52px;height:39px;background:#a8a8a8;border:1px solid #c8c8c8;border-right-color:#6e6e6e;border-bottom-color:#6e6e6e"></div>
<div style="left:793px;top:249px;width:46px;height:33px;background:linear-gradient(180deg,#00ff00 0%,#7dff7d 50%,#e6ffe6 100%);border:1px solid #7a7a7a"></div>
<div style="left:790.0px;width:52px;text-align:center;top:257.73px;height:16px;font:bold 12px/16px 'Liberation Sans', sans-serif;color:#000;white-space:nowrap;transform:scaleX(0.85)">ON</div>
<div style="left:4px;top:285px;width:838px;height:3px;background:#000"></div>
<div style="left:5px;top:288px;width:359px;height:188px;background:#696969"></div>
<div style="left:6px;top:288px;width:63px;height:63px;background:#696969;border-top:1px solid #b0b0b0;border-left:1px solid #b0b0b0;border-right:1px solid #000;border-bottom:1px solid #000"></div>
<div style="left:-0.5px;width:80px;text-align:center;top:290.4px;height:14px;font:bold 10px/14px 'Liberation Sans', sans-serif;color:#ffff00;white-space:nowrap;text-shadow:1px 1px 0 #000;letter-spacing:0px">LF (Hz)</div>
<svg style="position:absolute;left:0;top:0;overflow:visible" width="1" height="1"><circle cx="37.8" cy="325" r="19" fill="none" stroke="#000" stroke-width="1.2"/><circle cx="37.8" cy="325" r="17.1" fill="none" stroke="#8a8a8a" stroke-width="3"/><path d="M25.92,337.30 A17.1,17.1 0 1 1 50.10,313.12" fill="none" stroke="#fff" stroke-width="3"/><circle cx="37.8" cy="325" r="15.5" fill="#000080" stroke="#000" stroke-width="1.1"/><circle cx="32.4" cy="332" r="3.2" fill="#c8c8c8" stroke="#000" stroke-width="1"/></svg>
<div style="left:6px;top:350px;width:63px;height:22px;background:#000"></div>
<div style="left:-146.2px;width:200px;text-align:right;top:352.56px;height:15px;font:bold 11px/15px 'Liberation Sans', sans-serif;color:#ffff00;white-space:nowrap;letter-spacing:0px">20</div>
<div style="left:53px;top:351px;width:16px;height:20px;background:#fff"></div>
<div style="left:54px;top:352.0px;width:14px;height:8.5px;background:#ececec;border:1px solid #d4d4d4"></div>
<svg style="position:absolute;left:0;top:0;overflow:visible" width="1" height="1"><polygon points="57.5,358.25 64.5,358.25 61.0,354.25" fill="#8c8c8c"/></svg>
<div style="left:54px;top:361.5px;width:14px;height:8.5px;background:#ececec;border:1px solid #d4d4d4"></div>
<svg style="position:absolute;left:0;top:0;overflow:visible" width="1" height="1"><polygon points="57.5,363.75 64.5,363.75 61.0,367.75" fill="#000"/></svg>
<div style="left:54px;top:360.5px;width:14px;height:1px;background:#000"></div>
<div style="left:70px;top:288px;width:62px;height:63px;background:#696969;border-top:1px solid #b0b0b0;border-left:1px solid #b0b0b0;border-right:1px solid #000;border-bottom:1px solid #000"></div>
<div style="left:61.8px;width:80px;text-align:center;top:290.4px;height:14px;font:bold 10px/14px 'Liberation Sans', sans-serif;color:#ffff00;white-space:nowrap;text-shadow:1px 1px 0 #000;letter-spacing:0px">HF (Hz)</div>
<svg style="position:absolute;left:0;top:0;overflow:visible" width="1" height="1"><circle cx="100.5" cy="325" r="19" fill="none" stroke="#000" stroke-width="1.2"/><circle cx="100.5" cy="325" r="17.1" fill="none" stroke="#8a8a8a" stroke-width="3"/><path d="M88.62,337.30 A17.1,17.1 0 1 1 112.80,313.12" fill="none" stroke="#fff" stroke-width="3"/><circle cx="100.5" cy="325" r="15.5" fill="#000080" stroke="#000" stroke-width="1.1"/><circle cx="104" cy="332" r="3.2" fill="#c8c8c8" stroke="#000" stroke-width="1"/></svg>
<div style="left:70px;top:350px;width:62px;height:22px;background:#000"></div>
<div style="left:-83.2px;width:200px;text-align:right;top:352.56px;height:15px;font:bold 11px/15px 'Liberation Sans', sans-serif;color:#ffff00;white-space:nowrap;letter-spacing:0px">20000</div>
<div style="left:116px;top:351px;width:16px;height:20px;background:#fff"></div>
<div style="left:117px;top:352.0px;width:14px;height:8.5px;background:#ececec;border:1px solid #d4d4d4"></div>
<svg style="position:absolute;left:0;top:0;overflow:visible" width="1" height="1"><polygon points="120.5,358.25 127.5,358.25 124.0,354.25" fill="#000"/></svg>
<div style="left:117px;top:361.5px;width:14px;height:8.5px;background:#ececec;border:1px solid #d4d4d4"></div>
<svg style="position:absolute;left:0;top:0;overflow:visible" width="1" height="1"><polygon points="120.5,363.75 127.5,363.75 124.0,367.75" fill="#8c8c8c"/></svg>
<div style="left:117px;top:360.5px;width:14px;height:1px;background:#000"></div>
<div style="left:132px;top:288px;width:59px;height:47px;background:#696969;border-top:1px solid #b0b0b0;border-left:1px solid #b0b0b0;border-right:1px solid #000;border-bottom:1px solid #000"></div>
<div style="left:122.80000000000001px;width:80px;text-align:center;top:290.4px;height:14px;font:bold 10px/14px 'Liberation Sans', sans-serif;color:#ffff00;white-space:nowrap;text-shadow:1px 1px 0 #000;letter-spacing:-0.15px">K.Source</div>
<div style="left:137px;top:308px;width:48px;height:19px;background:#e1e1e1;border:1px solid #c9c9c9"></div>
<div style="left:141px;top:310.13px;height:14.5px;font:bold 10.5px/14.5px 'Liberation Sans', sans-serif;color:#111;white-space:nowrap;letter-spacing:-0.3px">01</div>
<svg style="left:137px;top:308px" width="48" height="19"><path d="M35,8 L39,12 L43,8" stroke="#333" stroke-width="1" fill="none"/></svg>
<div style="left:127.0px;width:70px;text-align:center;top:346.0px;height:14px;font:bold 10px/14px 'Liberation Sans', sans-serif;color:#fff;white-space:nowrap;text-shadow:2px 2px 0 #000;letter-spacing:-0.45px">SIDECHAIN</div>
<div style="left:5px;top:372px;width:187px;height:104px;background:#000"></div>
<svg style="left:0;top:0" width="846" height="671"><line x1="20.5" y1="374" x2="20.5" y2="464" stroke="#fff" stroke-width="1"/><line x1="35.5" y1="374" x2="35.5" y2="464" stroke="#a8a8a8" stroke-width="1"/><line x1="44.5" y1="374" x2="44.5" y2="464" stroke="#a8a8a8" stroke-width="1"/><line x1="51.5" y1="374" x2="51.5" y2="464" stroke="#a8a8a8" stroke-width="1"/><line x1="56.5" y1="374" x2="56.5" y2="464" stroke="#a8a8a8" stroke-width="1"/><line x1="60.5" y1="374" x2="60.5" y2="464" stroke="#a8a8a8" stroke-width="1"/><line x1="63.5" y1="374" x2="63.5" y2="464" stroke="#a8a8a8" stroke-width="1"/><line x1="66.5" y1="374" x2="66.5" y2="464" stroke="#a8a8a8" stroke-width="1"/><line x1="69.5" y1="374" x2="69.5" y2="464" stroke="#a8a8a8" stroke-width="1"/><line x1="71.5" y1="374" x2="71.5" y2="464" stroke="#fff" stroke-width="1"/><line x1="86.5" y1="374" x2="86.5" y2="464" stroke="#a8a8a8" stroke-width="1"/><line x1="95.5" y1="374" x2="95.5" y2="464" stroke="#a8a8a8" stroke-width="1"/><line x1="102.5" y1="374" x2="102.5" y2="464" stroke="#a8a8a8" stroke-width="1"/><line x1="107.5" y1="374" x2="107.5" y2="464" stroke="#a8a8a8" stroke-width="1"/><line x1="111.5" y1="374" x2="111.5" y2="464" stroke="#a8a8a8" stroke-width="1"/><line x1="114.5" y1="374" x2="114.5" y2="464" stroke="#a8a8a8" stroke-width="1"/><line x1="117.5" y1="374" x2="117.5" y2="464" stroke="#a8a8a8" stroke-width="1"/><line x1="120.5" y1="374" x2="120.5" y2="464" stroke="#a8a8a8" stroke-width="1"/><line x1="122.5" y1="374" x2="122.5" y2="464" stroke="#fff" stroke-width="1"/><line x1="138.5" y1="374" x2="138.5" y2="464" stroke="#a8a8a8" stroke-width="1"/><line x1="147.5" y1="374" x2="147.5" y2="464" stroke="#a8a8a8" stroke-width="1"/><line x1="153.5" y1="374" x2="153.5" y2="464" stroke="#a8a8a8" stroke-width="1"/><line x1="158.5" y1="374" x2="158.5" y2="464" stroke="#a8a8a8" stroke-width="1"/><line x1="162.5" y1="374" x2="162.5" y2="464" stroke="#a8a8a8" stroke-width="1"/><line x1="165.5" y1="374" x2="165.5" y2="464" stroke="#a8a8a8" stroke-width="1"/><line x1="168.5" y1="374" x2="168.5" y2="464" stroke="#a8a8a8" stroke-width="1"/><line x1="171.5" y1="374" x2="171.5" y2="464" stroke="#a8a8a8" stroke-width="1"/><line x1="173.5" y1="374" x2="173.5" y2="464" stroke="#fff" stroke-width="1"/><line x1="189.5" y1="374" x2="189.5" y2="464" stroke="#a8a8a8" stroke-width="1"/><line x1="189.5" y1="374" x2="189.5" y2="464" stroke="#a8a8a8" stroke-width="1"/><line x1="20.5" y1="374.5" x2="190.18263277842945" y2="374.5" stroke="#a8a8a8" stroke-width="1"/><line x1="20.5" y1="396.5" x2="190.18263277842945" y2="396.5" stroke="#a8a8a8" stroke-width="1"/><line x1="20.5" y1="441.5" x2="190.18263277842945" y2="441.5" stroke="#a8a8a8" stroke-width="1"/><line x1="20.5" y1="463.5" x2="190.18263277842945" y2="463.5" stroke="#a8a8a8" stroke-width="1"/><line x1="21.5" y1="385.5" x2="189.18263277842945" y2="385.5" stroke="#000" stroke-width="1.2"/><line x1="17.5" y1="385.5" x2="20.5" y2="385.5" stroke="#fff" stroke-width="1"/><line x1="21.5" y1="407.5" x2="189.18263277842945" y2="407.5" stroke="#000" stroke-width="1.2"/><line x1="17.5" y1="407.5" x2="20.5" y2="407.5" stroke="#fff" stroke-width="1"/><line x1="21.5" y1="430.5" x2="189.18263277842945" y2="430.5" stroke="#000" stroke-width="1.2"/><line x1="17.5" y1="430.5" x2="20.5" y2="430.5" stroke="#fff" stroke-width="1"/><line x1="21.5" y1="452.5" x2="189.18263277842945" y2="452.5" stroke="#000" stroke-width="1.2"/><line x1="17.5" y1="452.5" x2="20.5" y2="452.5" stroke="#fff" stroke-width="1"/><line x1="17.5" y1="419.5" x2="190.18263277842945" y2="419.5" stroke="#fff" stroke-width="1"/><line x1="20.5" y1="463.5" x2="190.18263277842945" y2="463.5" stroke="#fff" stroke-width="1"/><line x1="20.5" y1="374" x2="20.5" y2="464" stroke="#fff" stroke-width="1"/><polyline points="20.5,449.0 21.5,447.4 22.5,445.7 23.5,444.1 24.5,442.5 25.5,440.9 26.5,439.4 27.5,437.9 28.5,436.4 29.5,435.0 30.5,433.7 31.5,432.4 32.5,431.1 33.5,429.9 34.5,428.8 35.5,427.8 36.5,426.9 37.5,426.0 38.5,425.2 39.5,424.5 40.5,423.8 41.5,423.3 42.5,422.8 43.5,422.3 44.5,421.9 45.5,421.6 46.5,421.3 47.5,421.1 48.5,420.9 49.5,420.7 50.5,420.5 51.5,420.4 52.5,420.3 53.5,420.2 54.5,420.1 55.5,420.1 56.5,420.0 57.5,420.0 58.5,419.9 59.5,419.9 60.5,419.9 61.5,419.8 62.5,419.8 63.5,419.8 64.5,419.8 65.5,419.8 66.5,419.8 67.5,419.8 68.5,419.8 69.5,419.7 70.5,419.7 71.5,419.7 72.5,419.7 73.5,419.7 74.5,419.7 75.5,419.7 76.5,419.7 77.5,419.7 78.5,419.7 79.5,419.7 80.5,419.7 81.5,419.7 82.5,419.7 83.5,419.7 84.5,419.7 85.5,419.7 86.5,419.7 87.5,419.7 88.5,419.7 89.5,419.7 90.5,419.7 91.5,419.7 92.5,419.7 93.5,419.7 94.5,419.7 95.5,419.7 96.5,419.7 97.5,419.7 98.5,419.7 99.5,419.7 100.5,419.7 101.5,419.7 102.5,419.7 103.5,419.7 104.5,419.7 105.5,419.7 106.5,419.7 107.5,419.7 108.5,419.7 109.5,419.7 110.5,419.7 111.5,419.7 112.5,419.7 113.5,419.7 114.5,419.7 115.5,419.7 116.5,419.7 117.5,419.7 118.5,419.7 119.5,419.7 120.5,419.7 121.5,419.7 122.5,419.7 123.5,419.7 124.5,419.7 125.5,419.7 126.5,419.7 127.5,419.7 128.5,419.7 129.5,419.7 130.5,419.7 131.5,419.7 132.5,419.7 133.5,419.7 134.5,419.7 135.5,419.7 136.5,419.7 137.5,419.7 138.5,419.7 139.5,419.7 140.5,419.7 141.5,419.7 142.5,419.7 143.5,419.7 144.5,419.7 145.5,419.7 146.5,419.7 147.5,419.7 148.5,419.7 149.5,419.7 150.5,419.7 151.5,419.7 152.5,419.7 153.5,419.7 154.5,419.7 155.5,419.7 156.5,419.7 157.5,419.7 158.5,419.7 159.5,419.7 160.5,419.7 161.5,419.7 162.5,419.7 163.5,419.7 164.5,419.7 165.5,419.7 166.5,419.7 167.5,419.7 168.5,419.7 169.5,419.7 170.5,419.7 171.5,419.7 172.5,419.7 173.5,419.7 174.5,419.7 175.5,419.7 176.5,419.7 177.5,419.7 178.5,419.7 179.5,419.7 180.5,419.7 181.5,419.7 182.5,419.7 183.5,419.7 184.5,419.7 185.5,419.7 186.5,419.7 187.5,419.7 188.5,419.7" fill="none" stroke="#ffff00" stroke-width="3"/><rect x="32.2" y="418.3" width="7" height="7" fill="#00ff00" stroke="#fff" stroke-width="1"/><rect x="186.5" y="418.3" width="7" height="7" fill="#00ffff" stroke="#fff" stroke-width="1"/></svg>
<div style="left:-182.0px;width:200px;text-align:right;top:371.85999999999996px;height:12px;font:normal 8px/12px 'Liberation Sans', sans-serif;color:#e8e800;white-space:nowrap;text-shadow:0.2px 0 0 #e0e000;letter-spacing:-0.5px">20</div>
<div style="left:-182.0px;width:200px;text-align:right;top:379.03499999999997px;height:12px;font:normal 8px/12px 'Liberation Sans', sans-serif;color:#e8e800;white-space:nowrap;text-shadow:0.2px 0 0 #e0e000;letter-spacing:-0.5px">15</div>
<div style="left:-182.0px;width:200px;text-align:right;top:390.21px;height:12px;font:normal 8px/12px 'Liberation Sans', sans-serif;color:#e8e800;white-space:nowrap;text-shadow:0.2px 0 0 #e0e000;letter-spacing:-0.5px">10</div>
<div style="left:-182.0px;width:200px;text-align:right;top:401.38499999999993px;height:12px;font:normal 8px/12px 'Liberation Sans', sans-serif;color:#e8e800;white-space:nowrap;text-shadow:0.2px 0 0 #e0e000;letter-spacing:-0.5px">5</div>
<div style="left:-182.0px;width:200px;text-align:right;top:412.55999999999995px;height:12px;font:normal 8px/12px 'Liberation Sans', sans-serif;color:#e8e800;white-space:nowrap;text-shadow:0.2px 0 0 #e0e000;letter-spacing:-0.5px">-0</div>
<div style="left:-182.0px;width:200px;text-align:right;top:423.73499999999996px;height:12px;font:normal 8px/12px 'Liberation Sans', sans-serif;color:#e8e800;white-space:nowrap;text-shadow:0.2px 0 0 #e0e000;letter-spacing:-0.5px">-5</div>
<div style="left:-182.0px;width:200px;text-align:right;top:434.90999999999997px;height:12px;font:normal 8px/12px 'Liberation Sans', sans-serif;color:#e8e800;white-space:nowrap;text-shadow:0.2px 0 0 #e0e000;letter-spacing:-0.5px">-10</div>
<div style="left:-182.0px;width:200px;text-align:right;top:446.085px;height:12px;font:normal 8px/12px 'Liberation Sans', sans-serif;color:#e8e800;white-space:nowrap;text-shadow:0.2px 0 0 #e0e000;letter-spacing:-0.5px">-15</div>
<div style="left:-182.0px;width:200px;text-align:right;top:457.25999999999993px;height:12px;font:normal 8px/12px 'Liberation Sans', sans-serif;color:#e8e800;white-space:nowrap;text-shadow:0.2px 0 0 #e0e000;letter-spacing:-0.5px">-20</div>
<div style="left:2.0px;width:40px;text-align:center;top:464.25999999999993px;height:12px;font:normal 8px/12px 'Liberation Sans', sans-serif;color:#e8e800;white-space:nowrap;text-shadow:0.2px 0 0 #e0e000;letter-spacing:-0.5px">10</div>
<div style="left:51.599999999999994px;width:40px;text-align:center;top:464.25999999999993px;height:12px;font:normal 8px/12px 'Liberation Sans', sans-serif;color:#e8e800;white-space:nowrap;text-shadow:0.2px 0 0 #e0e000;letter-spacing:-0.5px">100</div>
<div style="left:102.7px;width:40px;text-align:center;top:464.25999999999993px;height:12px;font:normal 8px/12px 'Liberation Sans', sans-serif;color:#e8e800;white-space:nowrap;text-shadow:0.2px 0 0 #e0e000;letter-spacing:-0.5px">1000</div>
<div style="left:153.8px;width:40px;text-align:center;top:464.25999999999993px;height:12px;font:normal 8px/12px 'Liberation Sans', sans-serif;color:#e8e800;white-space:nowrap;text-shadow:0.2px 0 0 #e0e000;letter-spacing:-0.5px">10000</div>
<div style="left:192px;top:288px;width:57px;height:94px;background:#696969;border-top:1px solid #b0b0b0;border-left:1px solid #b0b0b0;border-right:1px solid #000;border-bottom:1px solid #000"></div>
<div style="left:181.5px;width:80px;text-align:center;top:290.2px;height:14px;font:bold 10px/14px 'Liberation Sans', sans-serif;color:#ffff00;white-space:nowrap;text-shadow:1px 1px 0 #000;letter-spacing:-0.4px">Shut</div>
<div style="left:209px;top:307px;width:25px;height:25px;background:linear-gradient(180deg,#8a8a8a,#b2b2b2);border:1px solid #000;box-shadow:inset 1px 1px 0 #fff"></div>
<div style="left:181.5px;width:80px;text-align:center;top:333.9px;height:14px;font:bold 10px/14px 'Liberation Sans', sans-serif;color:#ffff00;white-space:nowrap;text-shadow:1px 1px 0 #000;letter-spacing:-0.3px">Open</div>
<div style="left:209px;top:350px;width:25px;height:25px;background:linear-gradient(180deg,#00f000,#008a00);border:1px solid #000;box-shadow:inset 1px 1px 0 #fff"></div>
<div style="left:249px;top:288px;width:58px;height:71px;background:#696969;border-top:1px solid #b0b0b0;border-left:1px solid #b0b0b0;border-right:1px solid #000;border-bottom:1px solid #000"></div>
<div style="left:239.0px;width:80px;text-align:center;top:290.4px;height:14px;font:bold 10px/14px 'Liberation Sans', sans-serif;color:#ffff00;white-space:nowrap;text-shadow:1px 1px 0 #000;letter-spacing:-0.1px">Thres (dB)</div>
<svg style="position:absolute;left:0;top:0;overflow:visible" width="1" height="1"><circle cx="277.3" cy="329" r="19" fill="none" stroke="#000" stroke-width="1.2"/><circle cx="277.3" cy="329" r="17.1" fill="none" stroke="#8a8a8a" stroke-width="3"/><path d="M265.42,341.30 A17.1,17.1 0 1 1 289.60,317.12" fill="none" stroke="#fff" stroke-width="3"/><circle cx="277.3" cy="329" r="15.5" fill="#000080" stroke="#000" stroke-width="1.1"/><circle cx="279.5" cy="320.2" r="3.2" fill="#c8c8c8" stroke="#000" stroke-width="1"/></svg>
<div style="left:249px;top:358px;width:58px;height:23px;background:#000"></div>
<div style="left:90.80000000000001px;width:200px;text-align:right;top:361.06px;height:15px;font:bold 11px/15px 'Liberation Sans', sans-serif;color:#ffff00;white-space:nowrap;letter-spacing:0px">-16,0</div>
<div style="left:290px;top:359px;width:17px;height:21px;background:#fff"></div>
<div style="left:291px;top:360.0px;width:15px;height:9.0px;background:#ececec;border:1px solid #d4d4d4"></div>
<svg style="position:absolute;left:0;top:0;overflow:visible" width="1" height="1"><polygon points="295.0,366.5 302.0,366.5 298.5,362.5" fill="#000"/></svg>
<div style="left:291px;top:370.0px;width:15px;height:9.0px;background:#ececec;border:1px solid #d4d4d4"></div>
<svg style="position:absolute;left:0;top:0;overflow:visible" width="1" height="1"><polygon points="295.0,372.5 302.0,372.5 298.5,376.5" fill="#000"/></svg>
<div style="left:291px;top:369.0px;width:15px;height:1px;background:#000"></div>
<div style="left:307px;top:288px;width:57px;height:71px;background:#696969;border-top:1px solid #b0b0b0;border-left:1px solid #b0b0b0;border-right:1px solid #000;border-bottom:1px solid #000"></div>
<div style="left:297.2px;width:80px;text-align:center;top:290.4px;height:14px;font:bold 10px/14px 'Liberation Sans', sans-serif;color:#ffff00;white-space:nowrap;text-shadow:1px 1px 0 #000;letter-spacing:-0.1px">Range (dB)</div>
<svg style="position:absolute;left:0;top:0;overflow:visible" width="1" height="1"><circle cx="335.4" cy="329" r="19" fill="none" stroke="#000" stroke-width="1.2"/><circle cx="335.4" cy="329" r="17.1" fill="none" stroke="#8a8a8a" stroke-width="3"/><path d="M323.52,341.30 A17.1,17.1 0 1 1 347.70,317.12" fill="none" stroke="#fff" stroke-width="3"/><circle cx="335.4" cy="329" r="15.5" fill="#000080" stroke="#000" stroke-width="1.1"/><circle cx="343.5" cy="326.3" r="3.2" fill="#c8c8c8" stroke="#000" stroke-width="1"/></svg>
<div style="left:307px;top:358px;width:57px;height:23px;background:#000"></div>
<div style="left:147.8px;width:200px;text-align:right;top:361.06px;height:15px;font:bold 11px/15px 'Liberation Sans', sans-serif;color:#ffff00;white-space:nowrap;letter-spacing:0px">59,0</div>
<div style="left:347px;top:359px;width:17px;height:21px;background:#fff"></div>
<div style="left:348px;top:360.0px;width:15px;height:9.0px;background:#ececec;border:1px solid #d4d4d4"></div>
<svg style="position:absolute;left:0;top:0;overflow:visible" width="1" height="1"><polygon points="352.0,366.5 359.0,366.5 355.5,362.5" fill="#000"/></svg>
<div style="left:348px;top:370.0px;width:15px;height:9.0px;background:#ececec;border:1px solid #d4d4d4"></div>
<svg style="position:absolute;left:0;top:0;overflow:visible" width="1" height="1"><polygon points="352.0,372.5 359.0,372.5 355.5,376.5" fill="#000"/></svg>
<div style="left:348px;top:369.0px;width:15px;height:1px;background:#000"></div>
<div style="left:192px;top:382px;width:57px;height:71px;background:#696969;border-top:1px solid #b0b0b0;border-left:1px solid #b0b0b0;border-right:1px solid #000;border-bottom:1px solid #000"></div>
<div style="left:181.5px;width:80px;text-align:center;top:383.09999999999997px;height:14px;font:bold 10px/14px 'Liberation Sans', sans-serif;color:#ffff00;white-space:nowrap;text-shadow:1px 1px 0 #000;letter-spacing:-0.4px">Attack (ms)</div>
<svg style="position:absolute;left:0;top:0;overflow:visible" width="1" height="1"><circle cx="219.3" cy="422" r="19" fill="none" stroke="#000" stroke-width="1.2"/><circle cx="219.3" cy="422" r="17.1" fill="none" stroke="#8a8a8a" stroke-width="3"/><path d="M207.42,434.30 A17.1,17.1 0 1 1 231.60,410.12" fill="none" stroke="#fff" stroke-width="3"/><circle cx="219.3" cy="422" r="15.5" fill="#000080" stroke="#000" stroke-width="1.1"/><circle cx="214.5" cy="429" r="3.2" fill="#c8c8c8" stroke="#000" stroke-width="1"/></svg>
<div style="left:192px;top:452px;width:57px;height:23px;background:#000"></div>
<div style="left:32.80000000000001px;width:200px;text-align:right;top:455.06px;height:15px;font:bold 11px/15px 'Liberation Sans', sans-serif;color:#ffff00;white-space:nowrap;letter-spacing:0px">0,30</div>
<div style="left:232px;top:453px;width:17px;height:21px;background:#fff"></div>
<div style="left:233px;top:454.0px;width:15px;height:9.0px;background:#ececec;border:1px solid #d4d4d4"></div>
<svg style="position:absolute;left:0;top:0;overflow:visible" width="1" height="1"><polygon points="237.0,460.5 244.0,460.5 240.5,456.5" fill="#000"/></svg>
<div style="left:233px;top:464.0px;width:15px;height:9.0px;background:#ececec;border:1px solid #d4d4d4"></div>
<svg style="position:absolute;left:0;top:0;overflow:visible" width="1" height="1"><polygon points="237.0,466.5 244.0,466.5 240.5,470.5" fill="#000"/></svg>
<div style="left:233px;top:463.0px;width:15px;height:1px;background:#000"></div>
<div style="left:249px;top:382px;width:58px;height:71px;background:#696969;border-top:1px solid #b0b0b0;border-left:1px solid #b0b0b0;border-right:1px solid #000;border-bottom:1px solid #000"></div>
<div style="left:239.5px;width:80px;text-align:center;top:383.09999999999997px;height:14px;font:bold 10px/14px 'Liberation Sans', sans-serif;color:#ffff00;white-space:nowrap;text-shadow:1px 1px 0 #000;letter-spacing:-0.4px">Rel. (ms)</div>
<svg style="position:absolute;left:0;top:0;overflow:visible" width="1" height="1"><circle cx="277.3" cy="422" r="19" fill="none" stroke="#000" stroke-width="1.2"/><circle cx="277.3" cy="422" r="17.1" fill="none" stroke="#8a8a8a" stroke-width="3"/><path d="M265.42,434.30 A17.1,17.1 0 1 1 289.60,410.12" fill="none" stroke="#fff" stroke-width="3"/><circle cx="277.3" cy="422" r="15.5" fill="#000" stroke="#000" stroke-width="1.1"/><circle cx="272" cy="429" r="3.2" fill="#c8c8c8" stroke="#000" stroke-width="1"/></svg>
<div style="left:249px;top:452px;width:58px;height:23px;background:#000"></div>
<div style="left:90.80000000000001px;width:200px;text-align:right;top:455.06px;height:15px;font:bold 11px/15px 'Liberation Sans', sans-serif;color:#ffff00;white-space:nowrap;letter-spacing:0px">100,0</div>
<div style="left:290px;top:453px;width:17px;height:21px;background:#fff"></div>
<div style="left:291px;top:454.0px;width:15px;height:9.0px;background:#ececec;border:1px solid #d4d4d4"></div>
<svg style="position:absolute;left:0;top:0;overflow:visible" width="1" height="1"><polygon points="295.0,460.5 302.0,460.5 298.5,456.5" fill="#000"/></svg>
<div style="left:291px;top:464.0px;width:15px;height:9.0px;background:#ececec;border:1px solid #d4d4d4"></div>
<svg style="position:absolute;left:0;top:0;overflow:visible" width="1" height="1"><polygon points="295.0,466.5 302.0,466.5 298.5,470.5" fill="#8c8c8c"/></svg>
<div style="left:291px;top:463.0px;width:15px;height:1px;background:#000"></div>
<div style="left:307px;top:382px;width:57px;height:71px;background:#696969;border-top:1px solid #b0b0b0;border-left:1px solid #b0b0b0;border-right:1px solid #000;border-bottom:1px solid #000"></div>
<div style="left:297.7px;width:80px;text-align:center;top:383.09999999999997px;height:14px;font:bold 10px/14px 'Liberation Sans', sans-serif;color:#ffff00;white-space:nowrap;text-shadow:1px 1px 0 #000;letter-spacing:-0.4px">Hold (ms)</div>
<svg style="position:absolute;left:0;top:0;overflow:visible" width="1" height="1"><circle cx="335.4" cy="422" r="19" fill="none" stroke="#000" stroke-width="1.2"/><circle cx="335.4" cy="422" r="17.1" fill="none" stroke="#8a8a8a" stroke-width="3"/><path d="M323.52,434.30 A17.1,17.1 0 1 1 347.70,410.12" fill="none" stroke="#fff" stroke-width="3"/><circle cx="335.4" cy="422" r="15.5" fill="#000" stroke="#000" stroke-width="1.1"/><circle cx="330.4" cy="429" r="3.2" fill="#c8c8c8" stroke="#000" stroke-width="1"/></svg>
<div style="left:307px;top:452px;width:57px;height:23px;background:#000"></div>
<div style="left:147.8px;width:200px;text-align:right;top:455.06px;height:15px;font:bold 11px/15px 'Liberation Sans', sans-serif;color:#ffff00;white-space:nowrap;letter-spacing:0px">100,0</div>
<div style="left:347px;top:453px;width:17px;height:21px;background:#fff"></div>
<div style="left:348px;top:454.0px;width:15px;height:9.0px;background:#ececec;border:1px solid #d4d4d4"></div>
<svg style="position:absolute;left:0;top:0;overflow:visible" width="1" height="1"><polygon points="352.0,460.5 359.0,460.5 355.5,456.5" fill="#000"/></svg>
<div style="left:348px;top:464.0px;width:15px;height:9.0px;background:#ececec;border:1px solid #d4d4d4"></div>
<svg style="position:absolute;left:0;top:0;overflow:visible" width="1" height="1"><polygon points="352.0,466.5 359.0,466.5 355.5,470.5" fill="#000"/></svg>
<div style="left:348px;top:463.0px;width:15px;height:1px;background:#000"></div>
<div style="left:364px;top:288px;width:326px;height:189px;background:#000;border-top:1px solid #9c9c9c"></div>
<svg style="left:0;top:0" width="846" height="671"><line x1="403.5" y1="289" x2="403.5" y2="462" stroke="#9c9c9c" stroke-width="1"/><line x1="429.5" y1="289" x2="429.5" y2="462" stroke="#9c9c9c" stroke-width="1"/><line x1="455.5" y1="289" x2="455.5" y2="462" stroke="#9c9c9c" stroke-width="1"/><line x1="481.5" y1="289" x2="481.5" y2="462" stroke="#9c9c9c" stroke-width="1"/><line x1="507.5" y1="289" x2="507.5" y2="462" stroke="#9c9c9c" stroke-width="1"/><line x1="533.5" y1="289" x2="533.5" y2="462" stroke="#9c9c9c" stroke-width="1"/><line x1="559.5" y1="289" x2="559.5" y2="462" stroke="#9c9c9c" stroke-width="1"/><line x1="585.5" y1="289" x2="585.5" y2="462" stroke="#9c9c9c" stroke-width="1"/><line x1="611.5" y1="289" x2="611.5" y2="462" stroke="#9c9c9c" stroke-width="1"/><line x1="637.5" y1="289" x2="637.5" y2="462" stroke="#9c9c9c" stroke-width="1"/><line x1="663.5" y1="289" x2="663.5" y2="462" stroke="#9c9c9c" stroke-width="1"/><line x1="379" y1="303.5" x2="690" y2="303.5" stroke="#9c9c9c" stroke-width="1"/><line x1="379" y1="318.5" x2="690" y2="318.5" stroke="#9c9c9c" stroke-width="1"/><line x1="379" y1="333.5" x2="690" y2="333.5" stroke="#9c9c9c" stroke-width="1"/><line x1="379" y1="347.5" x2="690" y2="347.5" stroke="#9c9c9c" stroke-width="1"/><line x1="379" y1="362.5" x2="690" y2="362.5" stroke="#9c9c9c" stroke-width="1"/><line x1="379" y1="377.5" x2="690" y2="377.5" stroke="#9c9c9c" stroke-width="1"/><line x1="379" y1="391.5" x2="690" y2="391.5" stroke="#9c9c9c" stroke-width="1"/><line x1="379" y1="406.5" x2="690" y2="406.5" stroke="#9c9c9c" stroke-width="1"/><line x1="379" y1="421.5" x2="690" y2="421.5" stroke="#9c9c9c" stroke-width="1"/><line x1="379" y1="436.5" x2="690" y2="436.5" stroke="#9c9c9c" stroke-width="1"/><line x1="379" y1="450.5" x2="690" y2="450.5" stroke="#9c9c9c" stroke-width="1"/><line x1="377" y1="463.5" x2="543" y2="463.5" stroke="#ffff00" stroke-width="3"/><polyline points="542.5,458 543,430 544,400 544.5,375" fill="none" stroke="#ffff00" stroke-width="1"/><line x1="545" y1="374.5" x2="689" y2="290.5" stroke="#ffff00" stroke-width="2.7"/><rect x="541.5" y="371" width="7" height="7" fill="#00ff00" stroke="#fff" stroke-width="1"/><rect x="539.5" y="455.5" width="7" height="7" fill="#00ffff" stroke="#fff" stroke-width="1"/></svg>
<div style="left:177.5px;width:200px;text-align:right;top:297.39px;height:12.5px;font:normal 8.5px/12.5px 'Liberation Sans', sans-serif;color:#ffff00;white-space:nowrap;text-shadow:0.25px 0 0 #e0e000;letter-spacing:-0.2px">30</div>
<div style="left:177.5px;width:200px;text-align:right;top:312.39px;height:12.5px;font:normal 8.5px/12.5px 'Liberation Sans', sans-serif;color:#ffff00;white-space:nowrap;text-shadow:0.25px 0 0 #e0e000;letter-spacing:-0.2px">20</div>
<div style="left:177.5px;width:200px;text-align:right;top:327.39px;height:12.5px;font:normal 8.5px/12.5px 'Liberation Sans', sans-serif;color:#ffff00;white-space:nowrap;text-shadow:0.25px 0 0 #e0e000;letter-spacing:-0.2px">10</div>
<div style="left:177.5px;width:200px;text-align:right;top:341.39px;height:12.5px;font:normal 8.5px/12.5px 'Liberation Sans', sans-serif;color:#ffff00;white-space:nowrap;text-shadow:0.25px 0 0 #e0e000;letter-spacing:-0.2px">0</div>
<div style="left:177.5px;width:200px;text-align:right;top:356.39px;height:12.5px;font:normal 8.5px/12.5px 'Liberation Sans', sans-serif;color:#ffff00;white-space:nowrap;text-shadow:0.25px 0 0 #e0e000;letter-spacing:-0.2px">-10</div>
<div style="left:177.5px;width:200px;text-align:right;top:371.39px;height:12.5px;font:normal 8.5px/12.5px 'Liberation Sans', sans-serif;color:#ffff00;white-space:nowrap;text-shadow:0.25px 0 0 #e0e000;letter-spacing:-0.2px">-20</div>
<div style="left:177.5px;width:200px;text-align:right;top:385.39px;height:12.5px;font:normal 8.5px/12.5px 'Liberation Sans', sans-serif;color:#ffff00;white-space:nowrap;text-shadow:0.25px 0 0 #e0e000;letter-spacing:-0.2px">-30</div>
<div style="left:177.5px;width:200px;text-align:right;top:400.39px;height:12.5px;font:normal 8.5px/12.5px 'Liberation Sans', sans-serif;color:#ffff00;white-space:nowrap;text-shadow:0.25px 0 0 #e0e000;letter-spacing:-0.2px">-40</div>
<div style="left:177.5px;width:200px;text-align:right;top:415.39px;height:12.5px;font:normal 8.5px/12.5px 'Liberation Sans', sans-serif;color:#ffff00;white-space:nowrap;text-shadow:0.25px 0 0 #e0e000;letter-spacing:-0.2px">-50</div>
<div style="left:177.5px;width:200px;text-align:right;top:430.39px;height:12.5px;font:normal 8.5px/12.5px 'Liberation Sans', sans-serif;color:#ffff00;white-space:nowrap;text-shadow:0.25px 0 0 #e0e000;letter-spacing:-0.2px">-60</div>
<div style="left:177.5px;width:200px;text-align:right;top:444.39px;height:12.5px;font:normal 8.5px/12.5px 'Liberation Sans', sans-serif;color:#ffff00;white-space:nowrap;text-shadow:0.25px 0 0 #e0e000;letter-spacing:-0.2px">-70</div>
<div style="left:389.0px;width:30px;text-align:center;top:462.59px;height:12.5px;font:normal 8.5px/12.5px 'Liberation Sans', sans-serif;color:#ffff00;white-space:nowrap;text-shadow:0.25px 0 0 #e0e000;letter-spacing:-0.2px">-70</div>
<div style="left:415.0px;width:30px;text-align:center;top:462.59px;height:12.5px;font:normal 8.5px/12.5px 'Liberation Sans', sans-serif;color:#ffff00;white-space:nowrap;text-shadow:0.25px 0 0 #e0e000;letter-spacing:-0.2px">-60</div>
<div style="left:441.0px;width:30px;text-align:center;top:462.59px;height:12.5px;font:normal 8.5px/12.5px 'Liberation Sans', sans-serif;color:#ffff00;white-space:nowrap;text-shadow:0.25px 0 0 #e0e000;letter-spacing:-0.2px">-50</div>
<div style="left:467.0px;width:30px;text-align:center;top:462.59px;height:12.5px;font:normal 8.5px/12.5px 'Liberation Sans', sans-serif;color:#ffff00;white-space:nowrap;text-shadow:0.25px 0 0 #e0e000;letter-spacing:-0.2px">-40</div>
<div style="left:493.0px;width:30px;text-align:center;top:462.59px;height:12.5px;font:normal 8.5px/12.5px 'Liberation Sans', sans-serif;color:#ffff00;white-space:nowrap;text-shadow:0.25px 0 0 #e0e000;letter-spacing:-0.2px">-30</div>
<div style="left:519.0px;width:30px;text-align:center;top:462.59px;height:12.5px;font:normal 8.5px/12.5px 'Liberation Sans', sans-serif;color:#ffff00;white-space:nowrap;text-shadow:0.25px 0 0 #e0e000;letter-spacing:-0.2px">-20</div>
<div style="left:545.0px;width:30px;text-align:center;top:462.59px;height:12.5px;font:normal 8.5px/12.5px 'Liberation Sans', sans-serif;color:#ffff00;white-space:nowrap;text-shadow:0.25px 0 0 #e0e000;letter-spacing:-0.2px">-10</div>
<div style="left:571.0px;width:30px;text-align:center;top:462.59px;height:12.5px;font:normal 8.5px/12.5px 'Liberation Sans', sans-serif;color:#ffff00;white-space:nowrap;text-shadow:0.25px 0 0 #e0e000;letter-spacing:-0.2px">0</div>
<div style="left:597.0px;width:30px;text-align:center;top:462.59px;height:12.5px;font:normal 8.5px/12.5px 'Liberation Sans', sans-serif;color:#ffff00;white-space:nowrap;text-shadow:0.25px 0 0 #e0e000;letter-spacing:-0.2px">10</div>
<div style="left:623.0px;width:30px;text-align:center;top:462.59px;height:12.5px;font:normal 8.5px/12.5px 'Liberation Sans', sans-serif;color:#ffff00;white-space:nowrap;text-shadow:0.25px 0 0 #e0e000;letter-spacing:-0.2px">20</div>
<div style="left:649.0px;width:30px;text-align:center;top:462.59px;height:12.5px;font:normal 8.5px/12.5px 'Liberation Sans', sans-serif;color:#ffff00;white-space:nowrap;text-shadow:0.25px 0 0 #e0e000;letter-spacing:-0.2px">30</div>
<div style="left:690px;top:288px;width:53px;height:189px;background:#696969;border-top:1px solid #9c9c9c"></div>
<div style="left:688.0px;width:60px;text-align:center;top:289.0px;height:14px;font:bold 10px/14px 'Liberation Sans', sans-serif;color:#fff;white-space:nowrap;text-shadow:2px 2px 0 #000;letter-spacing:1.2px">GATE</div>
<div style="left:691px;top:302px;width:6px;height:133px;background:linear-gradient(90deg,#f4f4f4 0%,#d8d8d8 30%,#8a8a8a 100%)"></div>
<div style="left:699px;top:309px;width:20px;height:3px;background:#000"></div>
<div style="left:699px;top:313px;width:20px;height:3px;background:#000"></div>
<div style="left:699px;top:317px;width:20px;height:3px;background:#000"></div>
<div style="left:699px;top:321px;width:20px;height:3px;background:#000"></div>
<div style="left:699px;top:325px;width:20px;height:3px;background:#000"></div>
<div style="left:699px;top:329px;width:20px;height:3px;background:#000"></div>
<div style="left:699px;top:333px;width:20px;height:3px;background:#000"></div>
<div style="left:699px;top:337px;width:20px;height:3px;background:#000"></div>
<div style="left:699px;top:341px;width:20px;height:3px;background:#000"></div>
<div style="left:699px;top:345px;width:20px;height:3px;background:#000"></div>
<div style="left:699px;top:349px;width:20px;height:2px;background:#000"></div>
<div style="left:699px;top:352px;width:20px;height:3px;background:#000"></div>
<div style="left:699px;top:356px;width:20px;height:3px;background:#000"></div>
<div style="left:699px;top:360px;width:20px;height:3px;background:#000"></div>
<div style="left:699px;top:364px;width:20px;height:3px;background:#000"></div>
<div style="left:699px;top:368px;width:20px;height:3px;background:rgb(184,255,0)"></div>
<div style="left:699px;top:372px;width:20px;height:3px;background:rgb(171,255,0)"></div>
<div style="left:699px;top:376px;width:20px;height:3px;background:rgb(159,255,0)"></div>
<div style="left:699px;top:380px;width:20px;height:3px;background:rgb(147,255,0)"></div>
<div style="left:699px;top:384px;width:20px;height:3px;background:rgb(134,255,0)"></div>
<div style="left:699px;top:388px;width:20px;height:3px;background:rgb(122,255,0)"></div>
<div style="left:699px;top:392px;width:20px;height:3px;background:rgb(110,255,0)"></div>
<div style="left:699px;top:396px;width:20px;height:3px;background:rgb(98,255,0)"></div>
<div style="left:699px;top:400px;width:20px;height:3px;background:rgb(85,255,0)"></div>
<div style="left:699px;top:404px;width:20px;height:3px;background:rgb(73,255,0)"></div>
<div style="left:699px;top:408px;width:20px;height:3px;background:rgb(61,255,0)"></div>
<div style="left:699px;top:412px;width:20px;height:3px;background:rgb(49,255,0)"></div>
<div style="left:699px;top:416px;width:20px;height:3px;background:rgb(36,255,0)"></div>
<div style="left:699px;top:420px;width:20px;height:3px;background:rgb(24,255,0)"></div>
<div style="left:699px;top:424px;width:20px;height:3px;background:rgb(12,255,0)"></div>
<div style="left:699px;top:428px;width:20px;height:3px;background:rgb(0,255,0)"></div>
<div style="left:540.5px;width:200px;text-align:right;top:303.15999999999997px;height:12px;font:bold 8px/12px 'Liberation Sans', sans-serif;color:#ffff00;white-space:nowrap;letter-spacing:-0.2px">+20</div>
<div style="left:540.5px;width:200px;text-align:right;top:323.12999999999994px;height:12px;font:bold 8px/12px 'Liberation Sans', sans-serif;color:#ffff00;white-space:nowrap;letter-spacing:-0.2px">+10</div>
<div style="left:540.5px;width:200px;text-align:right;top:343.09999999999997px;height:12px;font:bold 8px/12px 'Liberation Sans', sans-serif;color:#ffff00;white-space:nowrap;letter-spacing:-0.2px">+0</div>
<div style="left:540.5px;width:200px;text-align:right;top:363.07px;height:12px;font:bold 8px/12px 'Liberation Sans', sans-serif;color:#ffff00;white-space:nowrap;letter-spacing:-0.2px">-10</div>
<div style="left:540.5px;width:200px;text-align:right;top:383.03999999999996px;height:12px;font:bold 8px/12px 'Liberation Sans', sans-serif;color:#ffff00;white-space:nowrap;letter-spacing:-0.2px">-20</div>
<div style="left:540.5px;width:200px;text-align:right;top:403.00999999999993px;height:12px;font:bold 8px/12px 'Liberation Sans', sans-serif;color:#ffff00;white-space:nowrap;letter-spacing:-0.2px">-30</div>
<div style="left:540.5px;width:200px;text-align:right;top:422.97999999999996px;height:12px;font:bold 8px/12px 'Liberation Sans', sans-serif;color:#ffff00;white-space:nowrap;letter-spacing:-0.2px">-40</div>
<div style="left:691px;top:436px;width:52px;height:39px;background:#a8a8a8;border:1px solid #c8c8c8;border-right-color:#6e6e6e;border-bottom-color:#6e6e6e"></div>
<div style="left:694px;top:439px;width:46px;height:33px;background:linear-gradient(180deg,#00ff00 0%,#7dff7d 50%,#e6ffe6 100%);border:1px solid #7a7a7a"></div>
<div style="left:691.0px;width:52px;text-align:center;top:447.93px;height:16px;font:bold 12px/16px 'Liberation Sans', sans-serif;color:#000;white-space:nowrap;transform:scaleX(0.85)">ON</div>
<div style="left:743px;top:288px;width:2px;height:379px;background:#000"></div>
<div style="left:5px;top:476px;width:738px;height:3px;background:#000"></div>
<div style="left:745px;top:288px;width:97px;height:379px;background:#696969;border-top:1px solid #9c9c9c"></div>
<div style="left:741.0px;width:110px;text-align:center;top:289.2px;height:14px;font:bold 10px/14px 'Liberation Sans', sans-serif;color:#fff;white-space:nowrap;text-shadow:2px 2px 0 #000;letter-spacing:0.65px">INPUT FADER</div>
<div style="left:745px;top:303px;width:53px;height:292px;background:#6e6e6e;border-top:1px solid #8c8c8c"></div>
<div style="left:745px;top:304px;width:5px;height:291px;background:linear-gradient(90deg,#f4f4f4 0%,#d8d8d8 30%,#8a8a8a 100%)"></div>
<div style="left:792px;top:304px;width:6px;height:291px;background:linear-gradient(90deg,#f4f4f4 0%,#d8d8d8 30%,#8a8a8a 100%)"></div>
<svg style="left:0;top:0" width="846" height="671"><line x1="767.7" y1="321" x2="767.7" y2="572" stroke="#ffff00" stroke-width="1.8"/><line x1="765" y1="321.00" x2="768" y2="321.00" stroke="#ffff00" stroke-width="1"/><line x1="765" y1="323.76" x2="768" y2="323.76" stroke="#ffff00" stroke-width="1"/><line x1="765" y1="326.52" x2="768" y2="326.52" stroke="#ffff00" stroke-width="1"/><line x1="765" y1="329.28" x2="768" y2="329.28" stroke="#ffff00" stroke-width="1"/><line x1="765" y1="332.04" x2="768" y2="332.04" stroke="#ffff00" stroke-width="1"/><line x1="765" y1="334.80" x2="768" y2="334.80" stroke="#ffff00" stroke-width="1"/><line x1="765" y1="337.56" x2="768" y2="337.56" stroke="#ffff00" stroke-width="1"/><line x1="765" y1="340.32" x2="768" y2="340.32" stroke="#ffff00" stroke-width="1"/><line x1="765" y1="343.08" x2="768" y2="343.08" stroke="#ffff00" stroke-width="1"/><line x1="765" y1="345.84" x2="768" y2="345.84" stroke="#ffff00" stroke-width="1"/><line x1="765" y1="348.60" x2="768" y2="348.60" stroke="#ffff00" stroke-width="1"/><line x1="765" y1="351.36" x2="768" y2="351.36" stroke="#ffff00" stroke-width="1"/><line x1="765" y1="354.12" x2="768" y2="354.12" stroke="#ffff00" stroke-width="1"/><line x1="765" y1="356.88" x2="768" y2="356.88" stroke="#ffff00" stroke-width="1"/><line x1="765" y1="359.64" x2="768" y2="359.64" stroke="#ffff00" stroke-width="1"/><line x1="765" y1="362.40" x2="768" y2="362.40" stroke="#ffff00" stroke-width="1"/><line x1="765" y1="365.16" x2="768" y2="365.16" stroke="#ffff00" stroke-width="1"/><line x1="765" y1="367.92" x2="768" y2="367.92" stroke="#ffff00" stroke-width="1"/><line x1="765" y1="370.68" x2="768" y2="370.68" stroke="#ffff00" stroke-width="1"/><line x1="765" y1="373.44" x2="768" y2="373.44" stroke="#ffff00" stroke-width="1"/><line x1="765" y1="376.20" x2="768" y2="376.20" stroke="#ffff00" stroke-width="1"/><line x1="765" y1="378.96" x2="768" y2="378.96" stroke="#ffff00" stroke-width="1"/><line x1="765" y1="381.72" x2="768" y2="381.72" stroke="#ffff00" stroke-width="1"/><line x1="765" y1="384.48" x2="768" y2="384.48" stroke="#ffff00" stroke-width="1"/><line x1="765" y1="387.24" x2="768" y2="387.24" stroke="#ffff00" stroke-width="1"/><line x1="765" y1="390.00" x2="768" y2="390.00" stroke="#ffff00" stroke-width="1"/><line x1="765" y1="392.76" x2="768" y2="392.76" stroke="#ffff00" stroke-width="1"/><line x1="765" y1="395.52" x2="768" y2="395.52" stroke="#ffff00" stroke-width="1"/><line x1="765" y1="398.28" x2="768" y2="398.28" stroke="#ffff00" stroke-width="1"/><line x1="765" y1="401.04" x2="768" y2="401.04" stroke="#ffff00" stroke-width="1"/><line x1="765" y1="403.80" x2="768" y2="403.80" stroke="#ffff00" stroke-width="1"/><line x1="765" y1="406.56" x2="768" y2="406.56" stroke="#ffff00" stroke-width="1"/><line x1="765" y1="409.32" x2="768" y2="409.32" stroke="#ffff00" stroke-width="1"/><line x1="765" y1="412.08" x2="768" y2="412.08" stroke="#ffff00" stroke-width="1"/><line x1="765" y1="414.84" x2="768" y2="414.84" stroke="#ffff00" stroke-width="1"/><line x1="765" y1="417.60" x2="768" y2="417.60" stroke="#ffff00" stroke-width="1"/><line x1="765" y1="420.36" x2="768" y2="420.36" stroke="#ffff00" stroke-width="1"/><line x1="765" y1="423.12" x2="768" y2="423.12" stroke="#ffff00" stroke-width="1"/><line x1="765" y1="425.88" x2="768" y2="425.88" stroke="#ffff00" stroke-width="1"/><line x1="765" y1="428.64" x2="768" y2="428.64" stroke="#ffff00" stroke-width="1"/><line x1="765" y1="431.40" x2="768" y2="431.40" stroke="#ffff00" stroke-width="1"/><line x1="765" y1="434.16" x2="768" y2="434.16" stroke="#ffff00" stroke-width="1"/><line x1="765" y1="436.92" x2="768" y2="436.92" stroke="#ffff00" stroke-width="1"/><line x1="765" y1="439.68" x2="768" y2="439.68" stroke="#ffff00" stroke-width="1"/><line x1="765" y1="442.44" x2="768" y2="442.44" stroke="#ffff00" stroke-width="1"/><line x1="765" y1="445.20" x2="768" y2="445.20" stroke="#ffff00" stroke-width="1"/><line x1="765" y1="447.96" x2="768" y2="447.96" stroke="#ffff00" stroke-width="1"/><line x1="765" y1="450.72" x2="768" y2="450.72" stroke="#ffff00" stroke-width="1"/><line x1="765" y1="453.48" x2="768" y2="453.48" stroke="#ffff00" stroke-width="1"/><line x1="765" y1="456.24" x2="768" y2="456.24" stroke="#ffff00" stroke-width="1"/><line x1="765" y1="459.00" x2="768" y2="459.00" stroke="#ffff00" stroke-width="1"/><line x1="765" y1="461.76" x2="768" y2="461.76" stroke="#ffff00" stroke-width="1"/><line x1="765" y1="464.52" x2="768" y2="464.52" stroke="#ffff00" stroke-width="1"/><line x1="765" y1="467.28" x2="768" y2="467.28" stroke="#ffff00" stroke-width="1"/><line x1="765" y1="470.04" x2="768" y2="470.04" stroke="#ffff00" stroke-width="1"/><line x1="765" y1="472.80" x2="768" y2="472.80" stroke="#ffff00" stroke-width="1"/><line x1="765" y1="475.56" x2="768" y2="475.56" stroke="#ffff00" stroke-width="1"/><line x1="765" y1="478.32" x2="768" y2="478.32" stroke="#ffff00" stroke-width="1"/><line x1="765" y1="481.08" x2="768" y2="481.08" stroke="#ffff00" stroke-width="1"/><line x1="765" y1="483.84" x2="768" y2="483.84" stroke="#ffff00" stroke-width="1"/><line x1="765" y1="486.60" x2="768" y2="486.60" stroke="#ffff00" stroke-width="1"/><line x1="765" y1="489.36" x2="768" y2="489.36" stroke="#ffff00" stroke-width="1"/><line x1="765" y1="492.12" x2="768" y2="492.12" stroke="#ffff00" stroke-width="1"/><line x1="765" y1="494.88" x2="768" y2="494.88" stroke="#ffff00" stroke-width="1"/><line x1="765" y1="497.64" x2="768" y2="497.64" stroke="#ffff00" stroke-width="1"/><line x1="765" y1="500.40" x2="768" y2="500.40" stroke="#ffff00" stroke-width="1"/><line x1="765" y1="503.16" x2="768" y2="503.16" stroke="#ffff00" stroke-width="1"/><line x1="765" y1="505.92" x2="768" y2="505.92" stroke="#ffff00" stroke-width="1"/><line x1="765" y1="508.68" x2="768" y2="508.68" stroke="#ffff00" stroke-width="1"/><line x1="765" y1="511.44" x2="768" y2="511.44" stroke="#ffff00" stroke-width="1"/><line x1="765" y1="514.20" x2="768" y2="514.20" stroke="#ffff00" stroke-width="1"/><line x1="765" y1="516.96" x2="768" y2="516.96" stroke="#ffff00" stroke-width="1"/><line x1="765" y1="519.72" x2="768" y2="519.72" stroke="#ffff00" stroke-width="1"/><line x1="765" y1="522.48" x2="768" y2="522.48" stroke="#ffff00" stroke-width="1"/><line x1="765" y1="525.24" x2="768" y2="525.24" stroke="#ffff00" stroke-width="1"/><line x1="765" y1="528.00" x2="768" y2="528.00" stroke="#ffff00" stroke-width="1"/><line x1="765" y1="530.76" x2="768" y2="530.76" stroke="#ffff00" stroke-width="1"/><line x1="765" y1="533.52" x2="768" y2="533.52" stroke="#ffff00" stroke-width="1"/><line x1="765" y1="536.28" x2="768" y2="536.28" stroke="#ffff00" stroke-width="1"/><line x1="765" y1="539.04" x2="768" y2="539.04" stroke="#ffff00" stroke-width="1"/><line x1="765" y1="541.80" x2="768" y2="541.80" stroke="#ffff00" stroke-width="1"/><line x1="765" y1="544.56" x2="768" y2="544.56" stroke="#ffff00" stroke-width="1"/><line x1="765" y1="547.32" x2="768" y2="547.32" stroke="#ffff00" stroke-width="1"/><line x1="765" y1="550.08" x2="768" y2="550.08" stroke="#ffff00" stroke-width="1"/><line x1="765" y1="552.84" x2="768" y2="552.84" stroke="#ffff00" stroke-width="1"/><line x1="765" y1="555.60" x2="768" y2="555.60" stroke="#ffff00" stroke-width="1"/><line x1="765" y1="558.36" x2="768" y2="558.36" stroke="#ffff00" stroke-width="1"/><line x1="765" y1="561.12" x2="768" y2="561.12" stroke="#ffff00" stroke-width="1"/><line x1="765" y1="563.88" x2="768" y2="563.88" stroke="#ffff00" stroke-width="1"/><line x1="765" y1="566.64" x2="768" y2="566.64" stroke="#ffff00" stroke-width="1"/><line x1="765" y1="569.40" x2="768" y2="569.40" stroke="#ffff00" stroke-width="1"/><rect x="778" y="321" width="3" height="251" fill="#e8e8e8"/><rect x="777.5" y="318" width="4" height="4" fill="#000"/><rect x="777.5" y="568" width="4" height="4" fill="#000"/></svg>
<div style="left:771px;top:357px;width:18px;height:9px;background:linear-gradient(90deg,#f4f4f4 0%,#c0c0c0 12%,#202020 32%,#000 40%,#000 100%)"></div>
<div style="left:772px;top:361px;width:17px;height:1.7px;background:#ffff00"></div>
<div style="left:565px;width:200px;text-align:right;top:314.65999999999997px;height:12px;font:normal 8px/12px 'Liberation Sans', sans-serif;color:#ffff00;white-space:nowrap;letter-spacing:-0.4px">+15</div>
<div style="left:565px;width:200px;text-align:right;top:328.51px;height:12px;font:normal 8px/12px 'Liberation Sans', sans-serif;color:#ffff00;white-space:nowrap;letter-spacing:-0.4px">+10</div>
<div style="left:565px;width:200px;text-align:right;top:342.35999999999996px;height:12px;font:normal 8px/12px 'Liberation Sans', sans-serif;color:#ffff00;white-space:nowrap;letter-spacing:-0.4px">+5</div>
<div style="left:565px;width:200px;text-align:right;top:356.21px;height:12px;font:normal 8px/12px 'Liberation Sans', sans-serif;color:#ffff00;white-space:nowrap;letter-spacing:-0.4px">+0</div>
<div style="left:565px;width:200px;text-align:right;top:370.05999999999995px;height:12px;font:normal 8px/12px 'Liberation Sans', sans-serif;color:#d4d400;white-space:nowrap;letter-spacing:-0.4px">-5</div>
<div style="left:565px;width:200px;text-align:right;top:383.90999999999997px;height:12px;font:normal 8px/12px 'Liberation Sans', sans-serif;color:#d4d400;white-space:nowrap;letter-spacing:-0.4px">-10</div>
<div style="left:565px;width:200px;text-align:right;top:397.75999999999993px;height:12px;font:normal 8px/12px 'Liberation Sans', sans-serif;color:#d4d400;white-space:nowrap;letter-spacing:-0.4px">-15</div>
<div style="left:565px;width:200px;text-align:right;top:411.60999999999996px;height:12px;font:normal 8px/12px 'Liberation Sans', sans-serif;color:#d4d400;white-space:nowrap;letter-spacing:-0.4px">-20</div>
<div style="left:565px;width:200px;text-align:right;top:425.46px;height:12px;font:normal 8px/12px 'Liberation Sans', sans-serif;color:#d4d400;white-space:nowrap;letter-spacing:-0.4px">-25</div>
<div style="left:565px;width:200px;text-align:right;top:439.30999999999995px;height:12px;font:normal 8px/12px 'Liberation Sans', sans-serif;color:#d4d400;white-space:nowrap;letter-spacing:-0.4px">-30</div>
<div style="left:565px;width:200px;text-align:right;top:453.15999999999997px;height:12px;font:normal 8px/12px 'Liberation Sans', sans-serif;color:#d4d400;white-space:nowrap;letter-spacing:-0.4px">-35</div>
<div style="left:565px;width:200px;text-align:right;top:467.00999999999993px;height:12px;font:normal 8px/12px 'Liberation Sans', sans-serif;color:#d4d400;white-space:nowrap;letter-spacing:-0.4px">-40</div>
<div style="left:565px;width:200px;text-align:right;top:480.85999999999996px;height:12px;font:normal 8px/12px 'Liberation Sans', sans-serif;color:#d4d400;white-space:nowrap;letter-spacing:-0.4px">-45</div>
<div style="left:565px;width:200px;text-align:right;top:494.71px;height:12px;font:normal 8px/12px 'Liberation Sans', sans-serif;color:#d4d400;white-space:nowrap;letter-spacing:-0.4px">-50</div>
<div style="left:565px;width:200px;text-align:right;top:508.56px;height:12px;font:normal 8px/12px 'Liberation Sans', sans-serif;color:#d4d400;white-space:nowrap;letter-spacing:-0.4px">-55</div>
<div style="left:565px;width:200px;text-align:right;top:522.4100000000001px;height:12px;font:normal 8px/12px 'Liberation Sans', sans-serif;color:#d4d400;white-space:nowrap;letter-spacing:-0.4px">-60</div>
<div style="left:565px;width:200px;text-align:right;top:536.26px;height:12px;font:normal 8px/12px 'Liberation Sans', sans-serif;color:#d4d400;white-space:nowrap;letter-spacing:-0.4px">-65</div>
<div style="left:565px;width:200px;text-align:right;top:550.11px;height:12px;font:normal 8px/12px 'Liberation Sans', sans-serif;color:#d4d400;white-space:nowrap;letter-spacing:-0.4px">-70</div>
<div style="left:565px;width:200px;text-align:right;top:563.96px;height:12px;font:normal 8px/12px 'Liberation Sans', sans-serif;color:#d4d400;white-space:nowrap;letter-spacing:-0.4px">-oo</div>
<div style="left:800px;top:318px;width:20px;height:7px;background:#000"></div>
<div style="left:800px;top:326px;width:20px;height:7px;background:#000"></div>
<div style="left:800px;top:334px;width:20px;height:7px;background:#000"></div>
<div style="left:800px;top:342px;width:20px;height:8px;background:#000"></div>
<div style="left:800px;top:351px;width:20px;height:7px;background:#000"></div>
<div style="left:800px;top:359px;width:20px;height:7px;background:#000"></div>
<div style="left:800px;top:367px;width:20px;height:7px;background:#000"></div>
<div style="left:800px;top:375px;width:20px;height:7px;background:#000"></div>
<div style="left:800px;top:383px;width:20px;height:8px;background:#000"></div>
<div style="left:800px;top:392px;width:20px;height:7px;background:#000"></div>
<div style="left:800px;top:400px;width:20px;height:7px;background:#000"></div>
<div style="left:800px;top:408px;width:20px;height:7px;background:#000"></div>
<div style="left:800px;top:416px;width:20px;height:7px;background:#000"></div>
<div style="left:800px;top:424px;width:20px;height:8px;background:rgb(184,255,0)"></div>
<div style="left:800px;top:433px;width:20px;height:7px;background:rgb(173,255,0)"></div>
<div style="left:800px;top:441px;width:20px;height:7px;background:rgb(162,255,0)"></div>
<div style="left:800px;top:449px;width:20px;height:7px;background:rgb(151,255,0)"></div>
<div style="left:800px;top:457px;width:20px;height:7px;background:rgb(140,255,0)"></div>
<div style="left:800px;top:465px;width:20px;height:8px;background:rgb(129,255,0)"></div>
<div style="left:800px;top:474px;width:20px;height:7px;background:rgb(119,255,0)"></div>
<div style="left:800px;top:482px;width:20px;height:7px;background:rgb(108,255,0)"></div>
<div style="left:800px;top:490px;width:20px;height:7px;background:rgb(97,255,0)"></div>
<div style="left:800px;top:498px;width:20px;height:7px;background:rgb(86,255,0)"></div>
<div style="left:800px;top:506px;width:20px;height:8px;background:rgb(75,255,0)"></div>
<div style="left:800px;top:515px;width:20px;height:7px;background:rgb(64,255,0)"></div>
<div style="left:800px;top:523px;width:20px;height:7px;background:rgb(54,255,0)"></div>
<div style="left:800px;top:531px;width:20px;height:7px;background:rgb(43,255,0)"></div>
<div style="left:800px;top:539px;width:20px;height:7px;background:rgb(32,255,0)"></div>
<div style="left:800px;top:547px;width:20px;height:8px;background:rgb(21,255,0)"></div>
<div style="left:800px;top:556px;width:20px;height:7px;background:rgb(10,255,0)"></div>
<div style="left:800px;top:564px;width:20px;height:7px;background:rgb(0,255,0)"></div>
<div style="left:641.5px;width:200px;text-align:right;top:314.89px;height:12.5px;font:normal 8.5px/12.5px 'Liberation Sans', sans-serif;color:#e0e000;white-space:nowrap;letter-spacing:-0.2px">+20</div>
<div style="left:641.5px;width:200px;text-align:right;top:355.99px;height:12.5px;font:normal 8.5px/12.5px 'Liberation Sans', sans-serif;color:#e0e000;white-space:nowrap;letter-spacing:-0.2px">+10</div>
<div style="left:641.5px;width:200px;text-align:right;top:397.09px;height:12.5px;font:normal 8.5px/12.5px 'Liberation Sans', sans-serif;color:#e0e000;white-space:nowrap;letter-spacing:-0.2px">+0</div>
<div style="left:641.5px;width:200px;text-align:right;top:438.19px;height:12.5px;font:normal 8.5px/12.5px 'Liberation Sans', sans-serif;color:#e0e000;white-space:nowrap;letter-spacing:-0.2px">-10</div>
<div style="left:641.5px;width:200px;text-align:right;top:479.28999999999996px;height:12.5px;font:normal 8.5px/12.5px 'Liberation Sans', sans-serif;color:#e0e000;white-space:nowrap;letter-spacing:-0.2px">-20</div>
<div style="left:641.5px;width:200px;text-align:right;top:520.39px;height:12.5px;font:normal 8.5px/12.5px 'Liberation Sans', sans-serif;color:#e0e000;white-space:nowrap;letter-spacing:-0.2px">-30</div>
<div style="left:641.5px;width:200px;text-align:right;top:561.49px;height:12.5px;font:normal 8.5px/12.5px 'Liberation Sans', sans-serif;color:#e0e000;white-space:nowrap;letter-spacing:-0.2px">-40</div>
<div style="left:749px;top:574px;width:41px;height:20px;background:#000"></div>
<div style="left:578.8px;width:200px;text-align:right;top:575.56px;height:15px;font:bold 11px/15px 'Liberation Sans', sans-serif;color:#ffff00;white-space:nowrap;letter-spacing:0px">0,0</div>
<div style="left:778px;top:575px;width:12px;height:18px;background:#fff"></div>
<div style="left:779px;top:576.0px;width:10px;height:7.5px;background:#ececec;border:1px solid #d4d4d4"></div>
<svg style="position:absolute;left:0;top:0;overflow:visible" width="1" height="1"><polygon points="780.5,581.75 787.5,581.75 784.0,577.75" fill="#000"/></svg>
<div style="left:779px;top:584.5px;width:10px;height:7.5px;background:#ececec;border:1px solid #d4d4d4"></div>
<svg style="position:absolute;left:0;top:0;overflow:visible" width="1" height="1"><polygon points="780.5,586.25 787.5,586.25 784.0,590.25" fill="#000"/></svg>
<div style="left:779px;top:583.5px;width:10px;height:1px;background:#000"></div>
<div style="left:748px;top:596px;width:21px;height:46px;background:#a0a0a0;border:1px solid #c8c8c8;border-right-color:#6e6e6e;border-bottom-color:#6e6e6e"></div>
<div style="left:750px;top:598px;width:17px;height:42px;background:linear-gradient(180deg,#a2a2a2 0%,#d8d8d8 70%,#ececec 100%);border:1px solid #8a8a8a"></div>
<div style="left:743.0px;width:31px;text-align:center;top:612.93px;height:16px;font:bold 12px/16px 'Liberation Sans', sans-serif;color:#000;white-space:nowrap;transform:scaleX(0.8)">AF</div>
<div style="left:771px;top:596px;width:71px;height:46px;background:#a8a8a8;border:1px solid #c8c8c8;border-right-color:#6e6e6e;border-bottom-color:#6e6e6e"></div>
<div style="left:774px;top:599px;width:65px;height:40px;background:linear-gradient(180deg,#00ff00 0%,#7dff7d 50%,#e6ffe6 100%);border:1px solid #7a7a7a"></div>
<div style="left:771.0px;width:71px;text-align:center;top:609.41px;height:20px;font:bold 16px/20px 'Liberation Sans', sans-serif;color:#000;white-space:nowrap;transform:scaleX(0.82)">ON</div>
<div style="left:748px;top:645px;width:94px;height:20px;background:#a0a0a0;border:1px solid #c8c8c8;border-right-color:#6e6e6e;border-bottom-color:#6e6e6e"></div>
<div style="left:751px;top:648px;width:88px;height:14px;background:linear-gradient(180deg,#a2a2a2 0%,#d8d8d8 70%,#ececec 100%);border:1px solid #8a8a8a"></div>
<div style="left:743.0px;width:104px;text-align:center;top:647.93px;height:16px;font:bold 12px/16px 'Liberation Sans', sans-serif;color:#000;white-space:nowrap;transform:scaleX(0.95)">SOLO</div>
<div style="left:5px;top:479px;width:359px;height:188px;background:#696969"></div>
<div style="left:6px;top:479px;width:66px;height:62px;background:#696969;border-top:1px solid #b0b0b0;border-left:1px solid #b0b0b0;border-right:1px solid #000;border-bottom:1px solid #000"></div>
<div style="left:1.0px;width:80px;text-align:center;top:480.4px;height:14px;font:bold 10px/14px 'Liberation Sans', sans-serif;color:#ffff00;white-space:nowrap;text-shadow:1px 1px 0 #000;letter-spacing:-0.2px">Gain(dB)</div>
<svg style="position:absolute;left:0;top:0;overflow:visible" width="1" height="1"><circle cx="38.3" cy="515" r="19" fill="none" stroke="#000" stroke-width="1.2"/><circle cx="38.3" cy="515" r="17.1" fill="none" stroke="#8a8a8a" stroke-width="3"/><path d="M26.42,527.30 A17.1,17.1 0 1 1 50.60,503.12" fill="none" stroke="#fff" stroke-width="3"/><circle cx="38.3" cy="515" r="15.5" fill="#800000" stroke="#000" stroke-width="1.1"/><circle cx="38.3" cy="506.2" r="3.2" fill="#c8c8c8" stroke="#000" stroke-width="1"/></svg>
<div style="left:6px;top:540px;width:66px;height:22px;background:#000"></div>
<div style="left:-143.2px;width:200px;text-align:right;top:542.56px;height:15px;font:bold 11px/15px 'Liberation Sans', sans-serif;color:#ffff00;white-space:nowrap;letter-spacing:0px">0,0</div>
<div style="left:56px;top:541px;width:16px;height:20px;background:#fff"></div>
<div style="left:57px;top:542.0px;width:14px;height:8.5px;background:#ececec;border:1px solid #d4d4d4"></div>
<svg style="position:absolute;left:0;top:0;overflow:visible" width="1" height="1"><polygon points="60.5,548.25 67.5,548.25 64.0,544.25" fill="#000"/></svg>
<div style="left:57px;top:551.5px;width:14px;height:8.5px;background:#ececec;border:1px solid #d4d4d4"></div>
<svg style="position:absolute;left:0;top:0;overflow:visible" width="1" height="1"><polygon points="60.5,553.75 67.5,553.75 64.0,557.75" fill="#8c8c8c"/></svg>
<div style="left:57px;top:550.5px;width:14px;height:1px;background:#000"></div>
<div style="left:72px;top:479px;width:74px;height:62px;background:#696969;border-top:1px solid #b0b0b0;border-left:1px solid #b0b0b0;border-right:1px solid #000;border-bottom:1px solid #000"></div>
<div style="left:69.5px;width:80px;text-align:center;top:480.4px;height:14px;font:bold 10px/14px 'Liberation Sans', sans-serif;color:#ffff00;white-space:nowrap;text-shadow:1px 1px 0 #000;letter-spacing:-0.2px">Freq(Hz)</div>
<svg style="position:absolute;left:0;top:0;overflow:visible" width="1" height="1"><circle cx="108.3" cy="515" r="19" fill="none" stroke="#000" stroke-width="1.2"/><circle cx="108.3" cy="515" r="17.1" fill="none" stroke="#8a8a8a" stroke-width="3"/><path d="M96.42,527.30 A17.1,17.1 0 1 1 120.60,503.12" fill="none" stroke="#fff" stroke-width="3"/><circle cx="108.3" cy="515" r="15.5" fill="#000080" stroke="#000" stroke-width="1.1"/><circle cx="101.7" cy="521.3" r="3.2" fill="#c8c8c8" stroke="#000" stroke-width="1"/></svg>
<div style="left:72px;top:540px;width:74px;height:22px;background:#000"></div>
<div style="left:-68.19999999999999px;width:200px;text-align:right;top:542.56px;height:15px;font:bold 11px/15px 'Liberation Sans', sans-serif;color:#ffff00;white-space:nowrap;letter-spacing:0px">1000</div>
<div style="left:131px;top:541px;width:15px;height:20px;background:#fff"></div>
<div style="left:132px;top:542.0px;width:13px;height:8.5px;background:#ececec;border:1px solid #d4d4d4"></div>
<svg style="position:absolute;left:0;top:0;overflow:visible" width="1" height="1"><polygon points="135.0,548.25 142.0,548.25 138.5,544.25" fill="#000"/></svg>
<div style="left:132px;top:551.5px;width:13px;height:8.5px;background:#ececec;border:1px solid #d4d4d4"></div>
<svg style="position:absolute;left:0;top:0;overflow:visible" width="1" height="1"><polygon points="135.0,553.75 142.0,553.75 138.5,557.75" fill="#000"/></svg>
<div style="left:132px;top:550.5px;width:13px;height:1px;background:#000"></div>
<div style="left:147px;top:479px;width:44px;height:62px;background:#696969;border-top:1px solid #b0b0b0;border-left:1px solid #b0b0b0;border-right:1px solid #000;border-bottom:1px solid #000"></div>
<div style="left:130.0px;width:80px;text-align:center;top:480.4px;height:14px;font:bold 10px/14px 'Liberation Sans', sans-serif;color:#ffff00;white-space:nowrap;text-shadow:1px 1px 0 #000;letter-spacing:-0.2px">Q</div>
<svg style="position:absolute;left:0;top:0;overflow:visible" width="1" height="1"><circle cx="168.3" cy="515" r="19" fill="none" stroke="#000" stroke-width="1.2"/><circle cx="168.3" cy="515" r="17.1" fill="none" stroke="#8a8a8a" stroke-width="3"/><path d="M156.42,527.30 A17.1,17.1 0 1 1 180.60,503.12" fill="none" stroke="#fff" stroke-width="3"/><circle cx="168.3" cy="515" r="15.5" fill="#000" stroke="#000" stroke-width="1.1"/><circle cx="160.3" cy="519.2" r="3.2" fill="#c8c8c8" stroke="#000" stroke-width="1"/></svg>
<div style="left:147px;top:540px;width:44px;height:22px;background:#000"></div>
<div style="left:-24.19999999999999px;width:200px;text-align:right;top:542.56px;height:15px;font:bold 11px/15px 'Liberation Sans', sans-serif;color:#ffff00;white-space:nowrap;letter-spacing:0px">1</div>
<div style="left:175px;top:541px;width:16px;height:20px;background:#fff"></div>
<div style="left:176px;top:542.0px;width:14px;height:8.5px;background:#ececec;border:1px solid #d4d4d4"></div>
<svg style="position:absolute;left:0;top:0;overflow:visible" width="1" height="1"><polygon points="179.5,548.25 186.5,548.25 183.0,544.25" fill="#000"/></svg>
<div style="left:176px;top:551.5px;width:14px;height:8.5px;background:#ececec;border:1px solid #d4d4d4"></div>
<svg style="position:absolute;left:0;top:0;overflow:visible" width="1" height="1"><polygon points="179.5,553.75 186.5,553.75 183.0,557.75" fill="#000"/></svg>
<div style="left:176px;top:550.5px;width:14px;height:1px;background:#000"></div>
<div style="left:5px;top:562px;width:187px;height:104px;background:#000"></div>
<svg style="left:0;top:0" width="846" height="671"><line x1="20.5" y1="564" x2="20.5" y2="654" stroke="#fff" stroke-width="1"/><line x1="35.5" y1="564" x2="35.5" y2="654" stroke="#a8a8a8" stroke-width="1"/><line x1="44.5" y1="564" x2="44.5" y2="654" stroke="#a8a8a8" stroke-width="1"/><line x1="51.5" y1="564" x2="51.5" y2="654" stroke="#a8a8a8" stroke-width="1"/><line x1="56.5" y1="564" x2="56.5" y2="654" stroke="#a8a8a8" stroke-width="1"/><line x1="60.5" y1="564" x2="60.5" y2="654" stroke="#a8a8a8" stroke-width="1"/><line x1="63.5" y1="564" x2="63.5" y2="654" stroke="#a8a8a8" stroke-width="1"/><line x1="66.5" y1="564" x2="66.5" y2="654" stroke="#a8a8a8" stroke-width="1"/><line x1="69.5" y1="564" x2="69.5" y2="654" stroke="#a8a8a8" stroke-width="1"/><line x1="71.5" y1="564" x2="71.5" y2="654" stroke="#fff" stroke-width="1"/><line x1="86.5" y1="564" x2="86.5" y2="654" stroke="#a8a8a8" stroke-width="1"/><line x1="95.5" y1="564" x2="95.5" y2="654" stroke="#a8a8a8" stroke-width="1"/><line x1="102.5" y1="564" x2="102.5" y2="654" stroke="#a8a8a8" stroke-width="1"/><line x1="107.5" y1="564" x2="107.5" y2="654" stroke="#a8a8a8" stroke-width="1"/><line x1="111.5" y1="564" x2="111.5" y2="654" stroke="#a8a8a8" stroke-width="1"/><line x1="114.5" y1="564" x2="114.5" y2="654" stroke="#a8a8a8" stroke-width="1"/><line x1="117.5" y1="564" x2="117.5" y2="654" stroke="#a8a8a8" stroke-width="1"/><line x1="120.5" y1="564" x2="120.5" y2="654" stroke="#a8a8a8" stroke-width="1"/><line x1="122.5" y1="564" x2="122.5" y2="654" stroke="#fff" stroke-width="1"/><line x1="138.5" y1="564" x2="138.5" y2="654" stroke="#a8a8a8" stroke-width="1"/><line x1="147.5" y1="564" x2="147.5" y2="654" stroke="#a8a8a8" stroke-width="1"/><line x1="153.5" y1="564" x2="153.5" y2="654" stroke="#a8a8a8" stroke-width="1"/><line x1="158.5" y1="564" x2="158.5" y2="654" stroke="#a8a8a8" stroke-width="1"/><line x1="162.5" y1="564" x2="162.5" y2="654" stroke="#a8a8a8" stroke-width="1"/><line x1="165.5" y1="564" x2="165.5" y2="654" stroke="#a8a8a8" stroke-width="1"/><line x1="168.5" y1="564" x2="168.5" y2="654" stroke="#a8a8a8" stroke-width="1"/><line x1="171.5" y1="564" x2="171.5" y2="654" stroke="#a8a8a8" stroke-width="1"/><line x1="173.5" y1="564" x2="173.5" y2="654" stroke="#fff" stroke-width="1"/><line x1="189.5" y1="564" x2="189.5" y2="654" stroke="#a8a8a8" stroke-width="1"/><line x1="189.5" y1="564" x2="189.5" y2="654" stroke="#a8a8a8" stroke-width="1"/><line x1="20.5" y1="564.5" x2="190.18263277842945" y2="564.5" stroke="#a8a8a8" stroke-width="1"/><line x1="20.5" y1="586.5" x2="190.18263277842945" y2="586.5" stroke="#a8a8a8" stroke-width="1"/><line x1="20.5" y1="631.5" x2="190.18263277842945" y2="631.5" stroke="#a8a8a8" stroke-width="1"/><line x1="20.5" y1="653.5" x2="190.18263277842945" y2="653.5" stroke="#a8a8a8" stroke-width="1"/><line x1="21.5" y1="575.5" x2="189.18263277842945" y2="575.5" stroke="#000" stroke-width="1.2"/><line x1="17.5" y1="575.5" x2="20.5" y2="575.5" stroke="#fff" stroke-width="1"/><line x1="21.5" y1="597.5" x2="189.18263277842945" y2="597.5" stroke="#000" stroke-width="1.2"/><line x1="17.5" y1="597.5" x2="20.5" y2="597.5" stroke="#fff" stroke-width="1"/><line x1="21.5" y1="620.5" x2="189.18263277842945" y2="620.5" stroke="#000" stroke-width="1.2"/><line x1="17.5" y1="620.5" x2="20.5" y2="620.5" stroke="#fff" stroke-width="1"/><line x1="21.5" y1="642.5" x2="189.18263277842945" y2="642.5" stroke="#000" stroke-width="1.2"/><line x1="17.5" y1="642.5" x2="20.5" y2="642.5" stroke="#fff" stroke-width="1"/><line x1="17.5" y1="608.5" x2="190.18263277842945" y2="608.5" stroke="#fff" stroke-width="1"/><line x1="20.5" y1="653.5" x2="190.18263277842945" y2="653.5" stroke="#fff" stroke-width="1"/><line x1="20.5" y1="564" x2="20.5" y2="654" stroke="#fff" stroke-width="1"/><polyline points="20.5,609.4 21.5,609.4 22.5,609.4 23.5,609.4 24.5,609.4 25.5,609.4 26.5,609.4 27.5,609.4 28.5,609.4 29.5,609.4 30.5,609.4 31.5,609.4 32.5,609.4 33.5,609.4 34.5,609.4 35.5,609.4 36.5,609.4 37.5,609.4 38.5,609.4 39.5,609.4 40.5,609.4 41.5,609.4 42.5,609.4 43.5,609.4 44.5,609.4 45.5,609.4 46.5,609.4 47.5,609.4 48.5,609.4 49.5,609.4 50.5,609.4 51.5,609.4 52.5,609.4 53.5,609.4 54.5,609.4 55.5,609.4 56.5,609.4 57.5,609.4 58.5,609.4 59.5,609.4 60.5,609.4 61.5,609.4 62.5,609.4 63.5,609.4 64.5,609.4 65.5,609.4 66.5,609.4 67.5,609.4 68.5,609.4 69.5,609.4 70.5,609.4 71.5,609.4 72.5,609.4 73.5,609.4 74.5,609.4 75.5,609.4 76.5,609.4 77.5,609.4 78.5,609.4 79.5,609.4 80.5,609.4 81.5,609.4 82.5,609.4 83.5,609.4 84.5,609.4 85.5,609.4 86.5,609.4 87.5,609.4 88.5,609.4 89.5,609.4 90.5,609.4 91.5,609.4 92.5,609.4 93.5,609.4 94.5,609.4 95.5,609.4 96.5,609.4 97.5,609.4 98.5,609.4 99.5,609.4 100.5,609.4 101.5,609.4 102.5,609.4 103.5,609.4 104.5,609.4 105.5,609.4 106.5,609.4 107.5,609.4 108.5,609.4 109.5,609.4 110.5,609.4 111.5,609.4 112.5,609.4 113.5,609.4 114.5,609.4 115.5,609.4 116.5,609.4 117.5,609.4 118.5,609.4 119.5,609.4 120.5,609.4 121.5,609.4 122.5,609.4 123.5,609.4 124.5,609.4 125.5,609.4 126.5,609.4 127.5,609.4 128.5,609.4 129.5,609.4 130.5,609.4 131.5,609.4 132.5,609.4 133.5,609.4 134.5,609.4 135.5,609.4 136.5,609.4 137.5,609.4 138.5,609.4 139.5,609.4 140.5,609.4 141.5,609.4 142.5,609.4 143.5,609.4 144.5,609.4 145.5,609.4 146.5,609.4 147.5,609.4 148.5,609.4 149.5,609.4 150.5,609.4 151.5,609.4 152.5,609.4 153.5,609.4 154.5,609.4 155.5,609.4 156.5,609.4 157.5,609.4 158.5,609.4 159.5,609.4 160.5,609.4 161.5,609.4 162.5,609.4 163.5,609.4 164.5,609.4 165.5,609.4 166.5,609.4 167.5,609.4 168.5,609.4 169.5,609.4 170.5,609.4 171.5,609.4 172.5,609.4 173.5,609.4 174.5,609.4 175.5,609.4 176.5,609.4 177.5,609.4 178.5,609.4 179.5,609.4 180.5,609.4 181.5,609.4 182.5,609.4 183.5,609.4 184.5,609.4 185.5,609.4 186.5,609.4 187.5,609.4 188.5,609.4" fill="none" stroke="#ffff00" stroke-width="3"/><rect x="118.5" y="608.0" width="7" height="7" fill="#00ff00" stroke="#fff" stroke-width="1"/></svg>
<div style="left:-182.0px;width:200px;text-align:right;top:561.76px;height:12px;font:bold 8px/12px 'Liberation Sans', sans-serif;color:#ffff00;white-space:nowrap;letter-spacing:-0.5px">20</div>
<div style="left:-182.0px;width:200px;text-align:right;top:568.935px;height:12px;font:bold 8px/12px 'Liberation Sans', sans-serif;color:#ffff00;white-space:nowrap;letter-spacing:-0.5px">15</div>
<div style="left:-182.0px;width:200px;text-align:right;top:580.11px;height:12px;font:bold 8px/12px 'Liberation Sans', sans-serif;color:#ffff00;white-space:nowrap;letter-spacing:-0.5px">10</div>
<div style="left:-182.0px;width:200px;text-align:right;top:591.285px;height:12px;font:bold 8px/12px 'Liberation Sans', sans-serif;color:#ffff00;white-space:nowrap;letter-spacing:-0.5px">5</div>
<div style="left:-182.0px;width:200px;text-align:right;top:602.46px;height:12px;font:bold 8px/12px 'Liberation Sans', sans-serif;color:#ffff00;white-space:nowrap;letter-spacing:-0.5px">-0</div>
<div style="left:-182.0px;width:200px;text-align:right;top:613.635px;height:12px;font:bold 8px/12px 'Liberation Sans', sans-serif;color:#ffff00;white-space:nowrap;letter-spacing:-0.5px">-5</div>
<div style="left:-182.0px;width:200px;text-align:right;top:624.81px;height:12px;font:bold 8px/12px 'Liberation Sans', sans-serif;color:#ffff00;white-space:nowrap;letter-spacing:-0.5px">-10</div>
<div style="left:-182.0px;width:200px;text-align:right;top:635.985px;height:12px;font:bold 8px/12px 'Liberation Sans', sans-serif;color:#ffff00;white-space:nowrap;letter-spacing:-0.5px">-15</div>
<div style="left:-182.0px;width:200px;text-align:right;top:647.16px;height:12px;font:bold 8px/12px 'Liberation Sans', sans-serif;color:#ffff00;white-space:nowrap;letter-spacing:-0.5px">-20</div>
<div style="left:2.0px;width:40px;text-align:center;top:654.16px;height:12px;font:bold 8px/12px 'Liberation Sans', sans-serif;color:#ffff00;white-space:nowrap;letter-spacing:-0.5px">10</div>
<div style="left:51.599999999999994px;width:40px;text-align:center;top:654.16px;height:12px;font:bold 8px/12px 'Liberation Sans', sans-serif;color:#ffff00;white-space:nowrap;letter-spacing:-0.5px">100</div>
<div style="left:102.7px;width:40px;text-align:center;top:654.16px;height:12px;font:bold 8px/12px 'Liberation Sans', sans-serif;color:#ffff00;white-space:nowrap;letter-spacing:-0.5px">1000</div>
<div style="left:153.8px;width:40px;text-align:center;top:654.16px;height:12px;font:bold 8px/12px 'Liberation Sans', sans-serif;color:#ffff00;white-space:nowrap;letter-spacing:-0.5px">10000</div>
<div style="left:192px;top:479px;width:57px;height:33px;background:#696969;border-top:1px solid #b0b0b0;border-left:1px solid #b0b0b0;border-right:1px solid #000;border-bottom:1px solid #000"></div>
<div style="left:181.8px;width:80px;text-align:center;top:480.2px;height:14px;font:bold 10px/14px 'Liberation Sans', sans-serif;color:#ffff00;white-space:nowrap;text-shadow:1px 1px 0 #000;letter-spacing:-0.15px">K.Source</div>
<div style="left:196px;top:491px;width:49px;height:19px;background:#e1e1e1;border:1px solid #c9c9c9"></div>
<div style="left:200px;top:493.13px;height:14.5px;font:bold 10.5px/14.5px 'Liberation Sans', sans-serif;color:#111;white-space:nowrap;letter-spacing:-0.3px">01</div>
<svg style="left:196px;top:491px" width="49" height="19"><path d="M35,8 L39,12 L43,8" stroke="#333" stroke-width="1" fill="none"/></svg>
<div style="left:185.2px;width:70px;text-align:center;top:517.0px;height:14px;font:bold 10px/14px 'Liberation Sans', sans-serif;color:#fff;white-space:nowrap;text-shadow:2px 2px 0 #000;letter-spacing:-0.45px">SIDECHAIN</div>
<div style="left:192px;top:540px;width:57px;height:33px;background:#696969;border-top:1px solid #b0b0b0;border-left:1px solid #b0b0b0;border-right:1px solid #000;border-bottom:1px solid #000"></div>
<div style="left:181.5px;width:80px;text-align:center;top:541.2px;height:14px;font:bold 10px/14px 'Liberation Sans', sans-serif;color:#ffff00;white-space:nowrap;text-shadow:1px 1px 0 #000;letter-spacing:-0.1px">Knee</div>
<div style="left:196px;top:552px;width:49px;height:19px;background:#e1e1e1;border:1px solid #c9c9c9"></div>
<div style="left:200px;top:553.56px;height:15px;font:bold 11px/15px 'Liberation Sans', sans-serif;color:#111;white-space:nowrap;letter-spacing:-0.4px">Hard</div>
<svg style="left:196px;top:552px" width="49" height="19"><path d="M35,8 L39,12 L43,8" stroke="#333" stroke-width="1" fill="none"/></svg>
<div style="left:249px;top:479px;width:58px;height:71px;background:#696969;border-top:1px solid #b0b0b0;border-left:1px solid #b0b0b0;border-right:1px solid #000;border-bottom:1px solid #000"></div>
<div style="left:239.2px;width:80px;text-align:center;top:480.7px;height:14px;font:bold 10px/14px 'Liberation Sans', sans-serif;color:#ffff00;white-space:nowrap;text-shadow:1px 1px 0 #000;letter-spacing:-0.1px">Thres (dB)</div>
<svg style="position:absolute;left:0;top:0;overflow:visible" width="1" height="1"><circle cx="277.3" cy="519" r="19" fill="none" stroke="#000" stroke-width="1.2"/><circle cx="277.3" cy="519" r="17.1" fill="none" stroke="#8a8a8a" stroke-width="3"/><path d="M265.42,531.30 A17.1,17.1 0 1 1 289.60,507.12" fill="none" stroke="#fff" stroke-width="3"/><circle cx="277.3" cy="519" r="15.5" fill="#000080" stroke="#000" stroke-width="1.1"/><circle cx="285.6" cy="516.4" r="3.2" fill="#c8c8c8" stroke="#000" stroke-width="1"/></svg>
<div style="left:249px;top:549px;width:58px;height:23px;background:#000"></div>
<div style="left:90.80000000000001px;width:200px;text-align:right;top:552.06px;height:15px;font:bold 11px/15px 'Liberation Sans', sans-serif;color:#ffff00;white-space:nowrap;letter-spacing:0px">0,0</div>
<div style="left:290px;top:550px;width:17px;height:21px;background:#fff"></div>
<div style="left:291px;top:551.0px;width:15px;height:9.0px;background:#ececec;border:1px solid #d4d4d4"></div>
<svg style="position:absolute;left:0;top:0;overflow:visible" width="1" height="1"><polygon points="295.0,557.5 302.0,557.5 298.5,553.5" fill="#000"/></svg>
<div style="left:291px;top:561.0px;width:15px;height:9.0px;background:#ececec;border:1px solid #d4d4d4"></div>
<svg style="position:absolute;left:0;top:0;overflow:visible" width="1" height="1"><polygon points="295.0,563.5 302.0,563.5 298.5,567.5" fill="#8c8c8c"/></svg>
<div style="left:291px;top:560.0px;width:15px;height:1px;background:#000"></div>
<div style="left:307px;top:479px;width:57px;height:71px;background:#696969;border-top:1px solid #b0b0b0;border-left:1px solid #b0b0b0;border-right:1px solid #000;border-bottom:1px solid #000"></div>
<div style="left:297.5px;width:80px;text-align:center;top:480.7px;height:14px;font:bold 10px/14px 'Liberation Sans', sans-serif;color:#ffff00;white-space:nowrap;text-shadow:1px 1px 0 #000;letter-spacing:-0.1px">Ratio</div>
<svg style="position:absolute;left:0;top:0;overflow:visible" width="1" height="1"><circle cx="335.4" cy="519" r="19" fill="none" stroke="#000" stroke-width="1.2"/><circle cx="335.4" cy="519" r="17.1" fill="none" stroke="#8a8a8a" stroke-width="3"/><path d="M323.52,531.30 A17.1,17.1 0 1 1 347.70,507.12" fill="none" stroke="#fff" stroke-width="3"/><circle cx="335.4" cy="519" r="15.5" fill="#000080" stroke="#000" stroke-width="1.1"/><circle cx="335.4" cy="510.5" r="3.2" fill="#c8c8c8" stroke="#000" stroke-width="1"/></svg>
<div style="left:307px;top:549px;width:57px;height:23px;background:#000"></div>
<div style="left:314.5px;width:30px;text-align:center;top:551.43px;height:16px;font:bold 12px/16px 'Liberation Sans', sans-serif;color:#ffff00;white-space:nowrap;">1:1</div>
<div style="left:345px;top:550px;width:18px;height:21px;background:#fff"></div>
<div style="left:346px;top:551.0px;width:16px;height:9.0px;background:#ececec;border:1px solid #d4d4d4"></div>
<svg style="position:absolute;left:0;top:0;overflow:visible" width="1" height="1"><polygon points="350.5,557.5 357.5,557.5 354.0,553.5" fill="#000"/></svg>
<div style="left:346px;top:561.0px;width:16px;height:9.0px;background:#ececec;border:1px solid #d4d4d4"></div>
<svg style="position:absolute;left:0;top:0;overflow:visible" width="1" height="1"><polygon points="350.5,563.5 357.5,563.5 354.0,567.5" fill="#000"/></svg>
<div style="left:346px;top:560.0px;width:16px;height:1px;background:#000"></div>
<div style="left:192px;top:573px;width:57px;height:71px;background:#696969;border-top:1px solid #b0b0b0;border-left:1px solid #b0b0b0;border-right:1px solid #000;border-bottom:1px solid #000"></div>
<div style="left:181.5px;width:80px;text-align:center;top:573.7px;height:14px;font:bold 10px/14px 'Liberation Sans', sans-serif;color:#ffff00;white-space:nowrap;text-shadow:1px 1px 0 #000;letter-spacing:-0.4px">Attack (ms)</div>
<svg style="position:absolute;left:0;top:0;overflow:visible" width="1" height="1"><circle cx="219.3" cy="614" r="19" fill="none" stroke="#000" stroke-width="1.2"/><circle cx="219.3" cy="614" r="17.1" fill="none" stroke="#8a8a8a" stroke-width="3"/><path d="M207.42,626.30 A17.1,17.1 0 1 1 231.60,602.12" fill="none" stroke="#fff" stroke-width="3"/><circle cx="219.3" cy="614" r="15.5" fill="#000" stroke="#000" stroke-width="1.1"/><circle cx="214.5" cy="621.4" r="3.2" fill="#c8c8c8" stroke="#000" stroke-width="1"/></svg>
<div style="left:192px;top:643px;width:57px;height:23px;background:#000"></div>
<div style="left:32.80000000000001px;width:200px;text-align:right;top:646.06px;height:15px;font:bold 11px/15px 'Liberation Sans', sans-serif;color:#ffff00;white-space:nowrap;letter-spacing:0px">0,30</div>
<div style="left:232px;top:644px;width:17px;height:21px;background:#fff"></div>
<div style="left:233px;top:645.0px;width:15px;height:9.0px;background:#ececec;border:1px solid #d4d4d4"></div>
<svg style="position:absolute;left:0;top:0;overflow:visible" width="1" height="1"><polygon points="237.0,651.5 244.0,651.5 240.5,647.5" fill="#000"/></svg>
<div style="left:233px;top:655.0px;width:15px;height:9.0px;background:#ececec;border:1px solid #d4d4d4"></div>
<svg style="position:absolute;left:0;top:0;overflow:visible" width="1" height="1"><polygon points="237.0,657.5 244.0,657.5 240.5,661.5" fill="#000"/></svg>
<div style="left:233px;top:654.0px;width:15px;height:1px;background:#000"></div>
<div style="left:249px;top:573px;width:58px;height:71px;background:#696969;border-top:1px solid #b0b0b0;border-left:1px solid #b0b0b0;border-right:1px solid #000;border-bottom:1px solid #000"></div>
<div style="left:239.5px;width:80px;text-align:center;top:573.7px;height:14px;font:bold 10px/14px 'Liberation Sans', sans-serif;color:#ffff00;white-space:nowrap;text-shadow:1px 1px 0 #000;letter-spacing:-0.4px">Rel. (ms)</div>
<svg style="position:absolute;left:0;top:0;overflow:visible" width="1" height="1"><circle cx="277.3" cy="614" r="19" fill="none" stroke="#000" stroke-width="1.2"/><circle cx="277.3" cy="614" r="17.1" fill="none" stroke="#8a8a8a" stroke-width="3"/><path d="M265.42,626.30 A17.1,17.1 0 1 1 289.60,602.12" fill="none" stroke="#fff" stroke-width="3"/><circle cx="277.3" cy="614" r="15.5" fill="#000" stroke="#000" stroke-width="1.1"/><circle cx="272.5" cy="620.3" r="3.2" fill="#c8c8c8" stroke="#000" stroke-width="1"/></svg>
<div style="left:249px;top:643px;width:58px;height:23px;background:#000"></div>
<div style="left:90.80000000000001px;width:200px;text-align:right;top:646.06px;height:15px;font:bold 11px/15px 'Liberation Sans', sans-serif;color:#ffff00;white-space:nowrap;letter-spacing:0px">100,0</div>
<div style="left:290px;top:644px;width:17px;height:21px;background:#fff"></div>
<div style="left:291px;top:645.0px;width:15px;height:9.0px;background:#ececec;border:1px solid #d4d4d4"></div>
<svg style="position:absolute;left:0;top:0;overflow:visible" width="1" height="1"><polygon points="295.0,651.5 302.0,651.5 298.5,647.5" fill="#000"/></svg>
<div style="left:291px;top:655.0px;width:15px;height:9.0px;background:#ececec;border:1px solid #d4d4d4"></div>
<svg style="position:absolute;left:0;top:0;overflow:visible" width="1" height="1"><polygon points="295.0,657.5 302.0,657.5 298.5,661.5" fill="#8c8c8c"/></svg>
<div style="left:291px;top:654.0px;width:15px;height:1px;background:#000"></div>
<div style="left:307px;top:573px;width:57px;height:71px;background:#696969;border-top:1px solid #b0b0b0;border-left:1px solid #b0b0b0;border-right:1px solid #000;border-bottom:1px solid #000"></div>
<div style="left:297.0px;width:80px;text-align:center;top:573.7px;height:14px;font:bold 10px/14px 'Liberation Sans', sans-serif;color:#ffff00;white-space:nowrap;text-shadow:1px 1px 0 #000;letter-spacing:0px">M.Gain (dB)</div>
<svg style="position:absolute;left:0;top:0;overflow:visible" width="1" height="1"><circle cx="335.4" cy="614" r="19" fill="none" stroke="#000" stroke-width="1.2"/><circle cx="335.4" cy="614" r="17.1" fill="none" stroke="#8a8a8a" stroke-width="3"/><path d="M323.52,626.30 A17.1,17.1 0 1 1 347.70,602.12" fill="none" stroke="#fff" stroke-width="3"/><circle cx="335.4" cy="614" r="15.5" fill="#800000" stroke="#000" stroke-width="1.1"/><circle cx="339.4" cy="605.5" r="3.2" fill="#c8c8c8" stroke="#000" stroke-width="1"/></svg>
<div style="left:307px;top:643px;width:57px;height:23px;background:#000"></div>
<div style="left:147.8px;width:200px;text-align:right;top:646.06px;height:15px;font:bold 11px/15px 'Liberation Sans', sans-serif;color:#ffff00;white-space:nowrap;letter-spacing:0px">4,0</div>
<div style="left:347px;top:644px;width:17px;height:21px;background:#fff"></div>
<div style="left:348px;top:645.0px;width:15px;height:9.0px;background:#ececec;border:1px solid #d4d4d4"></div>
<svg style="position:absolute;left:0;top:0;overflow:visible" width="1" height="1"><polygon points="352.0,651.5 359.0,651.5 355.5,647.5" fill="#000"/></svg>
<div style="left:348px;top:655.0px;width:15px;height:9.0px;background:#ececec;border:1px solid #d4d4d4"></div>
<svg style="position:absolute;left:0;top:0;overflow:visible" width="1" height="1"><polygon points="352.0,657.5 359.0,657.5 355.5,661.5" fill="#000"/></svg>
<div style="left:348px;top:654.0px;width:15px;height:1px;background:#000"></div>
<div style="left:364px;top:479px;width:273px;height:188px;background:#000;border-top:1px solid #9c9c9c"></div>
<svg style="left:0;top:0" width="846" height="671"><line x1="398.5" y1="479" x2="398.5" y2="652" stroke="#9c9c9c" stroke-width="1"/><line x1="420.5" y1="479" x2="420.5" y2="652" stroke="#9c9c9c" stroke-width="1"/><line x1="442.5" y1="479" x2="442.5" y2="652" stroke="#9c9c9c" stroke-width="1"/><line x1="463.5" y1="479" x2="463.5" y2="652" stroke="#9c9c9c" stroke-width="1"/><line x1="485.5" y1="479" x2="485.5" y2="652" stroke="#9c9c9c" stroke-width="1"/><line x1="507.5" y1="479" x2="507.5" y2="652" stroke="#9c9c9c" stroke-width="1"/><line x1="528.5" y1="479" x2="528.5" y2="652" stroke="#9c9c9c" stroke-width="1"/><line x1="550.5" y1="479" x2="550.5" y2="652" stroke="#9c9c9c" stroke-width="1"/><line x1="572.5" y1="479" x2="572.5" y2="652" stroke="#9c9c9c" stroke-width="1"/><line x1="593.5" y1="479" x2="593.5" y2="652" stroke="#9c9c9c" stroke-width="1"/><line x1="615.5" y1="479" x2="615.5" y2="652" stroke="#9c9c9c" stroke-width="1"/><line x1="379" y1="493.5" x2="637" y2="493.5" stroke="#9c9c9c" stroke-width="1"/><line x1="379" y1="508.5" x2="637" y2="508.5" stroke="#9c9c9c" stroke-width="1"/><line x1="379" y1="523.5" x2="637" y2="523.5" stroke="#9c9c9c" stroke-width="1"/><line x1="379" y1="537.5" x2="637" y2="537.5" stroke="#9c9c9c" stroke-width="1"/><line x1="379" y1="552.5" x2="637" y2="552.5" stroke="#9c9c9c" stroke-width="1"/><line x1="379" y1="567.5" x2="637" y2="567.5" stroke="#9c9c9c" stroke-width="1"/><line x1="379" y1="581.5" x2="637" y2="581.5" stroke="#9c9c9c" stroke-width="1"/><line x1="379" y1="596.5" x2="637" y2="596.5" stroke="#9c9c9c" stroke-width="1"/><line x1="379" y1="611.5" x2="637" y2="611.5" stroke="#9c9c9c" stroke-width="1"/><line x1="379" y1="625.5" x2="637" y2="625.5" stroke="#9c9c9c" stroke-width="1"/><line x1="379" y1="640.5" x2="637" y2="640.5" stroke="#9c9c9c" stroke-width="1"/><line x1="380" y1="648.05" x2="630" y2="478.88" stroke="#a4a4a4" stroke-width="2.6"/><line x1="377" y1="655.33" x2="631" y2="484.08" stroke="#ffff00" stroke-width="2.6"/><rect x="377" y="645" width="7" height="7" fill="#ff0000" stroke="#fff" stroke-width="1"/><rect x="547" y="533.5" width="7" height="7" fill="#00ff00" stroke="#fff" stroke-width="1"/><rect x="630" y="479.5" width="7" height="7" fill="#00ffff" stroke="#fff" stroke-width="1"/></svg>
<div style="left:177.5px;width:200px;text-align:right;top:487.39px;height:12.5px;font:normal 8.5px/12.5px 'Liberation Sans', sans-serif;color:#ffff00;white-space:nowrap;text-shadow:0.25px 0 0 #e0e000;letter-spacing:-0.2px">30</div>
<div style="left:177.5px;width:200px;text-align:right;top:502.39px;height:12.5px;font:normal 8.5px/12.5px 'Liberation Sans', sans-serif;color:#ffff00;white-space:nowrap;text-shadow:0.25px 0 0 #e0e000;letter-spacing:-0.2px">20</div>
<div style="left:177.5px;width:200px;text-align:right;top:517.39px;height:12.5px;font:normal 8.5px/12.5px 'Liberation Sans', sans-serif;color:#ffff00;white-space:nowrap;text-shadow:0.25px 0 0 #e0e000;letter-spacing:-0.2px">10</div>
<div style="left:177.5px;width:200px;text-align:right;top:531.39px;height:12.5px;font:normal 8.5px/12.5px 'Liberation Sans', sans-serif;color:#ffff00;white-space:nowrap;text-shadow:0.25px 0 0 #e0e000;letter-spacing:-0.2px">0</div>
<div style="left:177.5px;width:200px;text-align:right;top:546.39px;height:12.5px;font:normal 8.5px/12.5px 'Liberation Sans', sans-serif;color:#ffff00;white-space:nowrap;text-shadow:0.25px 0 0 #e0e000;letter-spacing:-0.2px">-10</div>
<div style="left:177.5px;width:200px;text-align:right;top:561.39px;height:12.5px;font:normal 8.5px/12.5px 'Liberation Sans', sans-serif;color:#ffff00;white-space:nowrap;text-shadow:0.25px 0 0 #e0e000;letter-spacing:-0.2px">-20</div>
<div style="left:177.5px;width:200px;text-align:right;top:575.39px;height:12.5px;font:normal 8.5px/12.5px 'Liberation Sans', sans-serif;color:#ffff00;white-space:nowrap;text-shadow:0.25px 0 0 #e0e000;letter-spacing:-0.2px">-30</div>
<div style="left:177.5px;width:200px;text-align:right;top:590.39px;height:12.5px;font:normal 8.5px/12.5px 'Liberation Sans', sans-serif;color:#ffff00;white-space:nowrap;text-shadow:0.25px 0 0 #e0e000;letter-spacing:-0.2px">-40</div>
<div style="left:177.5px;width:200px;text-align:right;top:605.39px;height:12.5px;font:normal 8.5px/12.5px 'Liberation Sans', sans-serif;color:#ffff00;white-space:nowrap;text-shadow:0.25px 0 0 #e0e000;letter-spacing:-0.2px">-50</div>
<div style="left:177.5px;width:200px;text-align:right;top:619.39px;height:12.5px;font:normal 8.5px/12.5px 'Liberation Sans', sans-serif;color:#ffff00;white-space:nowrap;text-shadow:0.25px 0 0 #e0e000;letter-spacing:-0.2px">-60</div>
<div style="left:177.5px;width:200px;text-align:right;top:634.39px;height:12.5px;font:normal 8.5px/12.5px 'Liberation Sans', sans-serif;color:#ffff00;white-space:nowrap;text-shadow:0.25px 0 0 #e0e000;letter-spacing:-0.2px">-70</div>
<div style="left:384.0px;width:30px;text-align:center;top:651.89px;height:12.5px;font:normal 8.5px/12.5px 'Liberation Sans', sans-serif;color:#ffff00;white-space:nowrap;text-shadow:0.25px 0 0 #e0e000;letter-spacing:-0.2px">-70</div>
<div style="left:406.0px;width:30px;text-align:center;top:651.89px;height:12.5px;font:normal 8.5px/12.5px 'Liberation Sans', sans-serif;color:#ffff00;white-space:nowrap;text-shadow:0.25px 0 0 #e0e000;letter-spacing:-0.2px">-60</div>
<div style="left:428.0px;width:30px;text-align:center;top:651.89px;height:12.5px;font:normal 8.5px/12.5px 'Liberation Sans', sans-serif;color:#ffff00;white-space:nowrap;text-shadow:0.25px 0 0 #e0e000;letter-spacing:-0.2px">-50</div>
<div style="left:449.0px;width:30px;text-align:center;top:651.89px;height:12.5px;font:normal 8.5px/12.5px 'Liberation Sans', sans-serif;color:#ffff00;white-space:nowrap;text-shadow:0.25px 0 0 #e0e000;letter-spacing:-0.2px">-40</div>
<div style="left:471.0px;width:30px;text-align:center;top:651.89px;height:12.5px;font:normal 8.5px/12.5px 'Liberation Sans', sans-serif;color:#ffff00;white-space:nowrap;text-shadow:0.25px 0 0 #e0e000;letter-spacing:-0.2px">-30</div>
<div style="left:493.0px;width:30px;text-align:center;top:651.89px;height:12.5px;font:normal 8.5px/12.5px 'Liberation Sans', sans-serif;color:#ffff00;white-space:nowrap;text-shadow:0.25px 0 0 #e0e000;letter-spacing:-0.2px">-20</div>
<div style="left:514.0px;width:30px;text-align:center;top:651.89px;height:12.5px;font:normal 8.5px/12.5px 'Liberation Sans', sans-serif;color:#ffff00;white-space:nowrap;text-shadow:0.25px 0 0 #e0e000;letter-spacing:-0.2px">-10</div>
<div style="left:536.0px;width:30px;text-align:center;top:651.89px;height:12.5px;font:normal 8.5px/12.5px 'Liberation Sans', sans-serif;color:#ffff00;white-space:nowrap;text-shadow:0.25px 0 0 #e0e000;letter-spacing:-0.2px">0</div>
<div style="left:558.0px;width:30px;text-align:center;top:651.89px;height:12.5px;font:normal 8.5px/12.5px 'Liberation Sans', sans-serif;color:#ffff00;white-space:nowrap;text-shadow:0.25px 0 0 #e0e000;letter-spacing:-0.2px">10</div>
<div style="left:579.0px;width:30px;text-align:center;top:651.89px;height:12.5px;font:normal 8.5px/12.5px 'Liberation Sans', sans-serif;color:#ffff00;white-space:nowrap;text-shadow:0.25px 0 0 #e0e000;letter-spacing:-0.2px">20</div>
<div style="left:601.0px;width:30px;text-align:center;top:651.89px;height:12.5px;font:normal 8.5px/12.5px 'Liberation Sans', sans-serif;color:#ffff00;white-space:nowrap;text-shadow:0.25px 0 0 #e0e000;letter-spacing:-0.2px">30</div>
<div style="left:637px;top:479px;width:106px;height:188px;background:#696969;border-top:1px solid #9c9c9c"></div>
<div style="left:635.0px;width:110px;text-align:center;top:479.5px;height:14px;font:bold 10px/14px 'Liberation Sans', sans-serif;color:#fff;white-space:nowrap;text-shadow:2px 2px 0 #000;letter-spacing:0.55px">COMPRESSOR</div>
<div style="left:638px;top:492px;width:4px;height:138px;background:linear-gradient(90deg,#f4f4f4 0%,#d8d8d8 30%,#8a8a8a 100%)"></div>
<div style="left:642px;top:498px;width:9px;height:3px;background:#000"></div>
<div style="left:642px;top:502px;width:9px;height:3px;background:#000"></div>
<div style="left:642px;top:506px;width:9px;height:3px;background:#000"></div>
<div style="left:642px;top:510px;width:9px;height:3px;background:#000"></div>
<div style="left:642px;top:514px;width:9px;height:3px;background:#000"></div>
<div style="left:642px;top:518px;width:9px;height:3px;background:#000"></div>
<div style="left:642px;top:522px;width:9px;height:3px;background:#000"></div>
<div style="left:642px;top:526px;width:9px;height:3px;background:#000"></div>
<div style="left:642px;top:530px;width:9px;height:3px;background:#000"></div>
<div style="left:642px;top:534px;width:9px;height:3px;background:#000"></div>
<div style="left:642px;top:538px;width:9px;height:3px;background:#000"></div>
<div style="left:642px;top:542px;width:9px;height:3px;background:#000"></div>
<div style="left:642px;top:546px;width:9px;height:3px;background:#000"></div>
<div style="left:642px;top:550px;width:9px;height:3px;background:#000"></div>
<div style="left:642px;top:554px;width:9px;height:3px;background:#000"></div>
<div style="left:642px;top:558px;width:9px;height:2px;background:#000"></div>
<div style="left:642px;top:561px;width:9px;height:3px;background:#000"></div>
<div style="left:642px;top:565px;width:9px;height:3px;background:#000"></div>
<div style="left:642px;top:569px;width:9px;height:3px;background:#000"></div>
<div style="left:642px;top:573px;width:9px;height:3px;background:#000"></div>
<div style="left:642px;top:577px;width:9px;height:3px;background:#000"></div>
<div style="left:642px;top:581px;width:9px;height:3px;background:#000"></div>
<div style="left:642px;top:585px;width:9px;height:3px;background:#000"></div>
<div style="left:642px;top:589px;width:9px;height:3px;background:#000"></div>
<div style="left:642px;top:593px;width:9px;height:3px;background:#000"></div>
<div style="left:642px;top:597px;width:9px;height:3px;background:#000"></div>
<div style="left:642px;top:601px;width:9px;height:3px;background:#000"></div>
<div style="left:642px;top:605px;width:9px;height:3px;background:#000"></div>
<div style="left:642px;top:609px;width:9px;height:3px;background:#000"></div>
<div style="left:642px;top:613px;width:9px;height:3px;background:#000"></div>
<div style="left:642px;top:617px;width:9px;height:3px;background:#000"></div>
<div style="left:642px;top:618px;width:9px;height:2px;background:#a00000"></div>
<div style="left:463.5px;width:200px;text-align:right;top:493.96px;height:12px;font:bold 8px/12px 'Liberation Sans', sans-serif;color:#ffff00;white-space:nowrap;">30</div>
<div style="left:463.5px;width:200px;text-align:right;top:514.26px;height:12px;font:bold 8px/12px 'Liberation Sans', sans-serif;color:#ffff00;white-space:nowrap;">25</div>
<div style="left:463.5px;width:200px;text-align:right;top:534.5600000000001px;height:12px;font:bold 8px/12px 'Liberation Sans', sans-serif;color:#ffff00;white-space:nowrap;">20</div>
<div style="left:463.5px;width:200px;text-align:right;top:554.86px;height:12px;font:bold 8px/12px 'Liberation Sans', sans-serif;color:#ffff00;white-space:nowrap;">15</div>
<div style="left:463.5px;width:200px;text-align:right;top:575.1600000000001px;height:12px;font:bold 8px/12px 'Liberation Sans', sans-serif;color:#ffff00;white-space:nowrap;">10</div>
<div style="left:463.5px;width:200px;text-align:right;top:595.46px;height:12px;font:bold 8px/12px 'Liberation Sans', sans-serif;color:#ffff00;white-space:nowrap;">5</div>
<div style="left:632.5px;width:60px;text-align:center;top:629.2px;height:14px;font:bold 10px/14px 'Liberation Sans', sans-serif;color:#ffff00;white-space:nowrap;text-shadow:1px 1px 0 #000;letter-spacing:-0.1px">Gain</div>
<div style="left:632.5px;width:60px;text-align:center;top:640.2px;height:14px;font:bold 10px/14px 'Liberation Sans', sans-serif;color:#ffff00;white-space:nowrap;text-shadow:1px 1px 0 #000;letter-spacing:-0.3px">Reduction</div>
<div style="left:691px;top:492px;width:6px;height:134px;background:linear-gradient(90deg,#f4f4f4 0%,#d8d8d8 30%,#8a8a8a 100%)"></div>
<div style="left:699px;top:498px;width:20px;height:3px;background:#000"></div>
<div style="left:699px;top:502px;width:20px;height:3px;background:#000"></div>
<div style="left:699px;top:506px;width:20px;height:3px;background:#000"></div>
<div style="left:699px;top:510px;width:20px;height:3px;background:#000"></div>
<div style="left:699px;top:514px;width:20px;height:3px;background:#000"></div>
<div style="left:699px;top:518px;width:20px;height:3px;background:#000"></div>
<div style="left:699px;top:522px;width:20px;height:3px;background:#000"></div>
<div style="left:699px;top:526px;width:20px;height:3px;background:#000"></div>
<div style="left:699px;top:530px;width:20px;height:3px;background:#000"></div>
<div style="left:699px;top:534px;width:20px;height:3px;background:#000"></div>
<div style="left:699px;top:538px;width:20px;height:3px;background:#000"></div>
<div style="left:699px;top:542px;width:20px;height:3px;background:#000"></div>
<div style="left:699px;top:546px;width:20px;height:3px;background:#000"></div>
<div style="left:699px;top:550px;width:20px;height:3px;background:rgb(184,255,0)"></div>
<div style="left:699px;top:554px;width:20px;height:3px;background:rgb(173,255,0)"></div>
<div style="left:699px;top:558px;width:20px;height:3px;background:rgb(162,255,0)"></div>
<div style="left:699px;top:562px;width:20px;height:3px;background:rgb(151,255,0)"></div>
<div style="left:699px;top:566px;width:20px;height:3px;background:rgb(140,255,0)"></div>
<div style="left:699px;top:570px;width:20px;height:3px;background:rgb(129,255,0)"></div>
<div style="left:699px;top:574px;width:20px;height:2px;background:rgb(119,255,0)"></div>
<div style="left:699px;top:577px;width:20px;height:3px;background:rgb(108,255,0)"></div>
<div style="left:699px;top:581px;width:20px;height:3px;background:rgb(97,255,0)"></div>
<div style="left:699px;top:585px;width:20px;height:3px;background:rgb(86,255,0)"></div>
<div style="left:699px;top:589px;width:20px;height:3px;background:rgb(75,255,0)"></div>
<div style="left:699px;top:593px;width:20px;height:3px;background:rgb(64,255,0)"></div>
<div style="left:699px;top:597px;width:20px;height:3px;background:rgb(54,255,0)"></div>
<div style="left:699px;top:601px;width:20px;height:3px;background:rgb(43,255,0)"></div>
<div style="left:699px;top:605px;width:20px;height:3px;background:rgb(32,255,0)"></div>
<div style="left:699px;top:609px;width:20px;height:3px;background:rgb(21,255,0)"></div>
<div style="left:699px;top:613px;width:20px;height:3px;background:rgb(10,255,0)"></div>
<div style="left:699px;top:617px;width:20px;height:3px;background:rgb(0,255,0)"></div>
<div style="left:540.5px;width:200px;text-align:right;top:493.26px;height:12px;font:bold 8px/12px 'Liberation Sans', sans-serif;color:#ffff00;white-space:nowrap;letter-spacing:-0.2px">+20</div>
<div style="left:540.5px;width:200px;text-align:right;top:513.1600000000001px;height:12px;font:bold 8px/12px 'Liberation Sans', sans-serif;color:#ffff00;white-space:nowrap;letter-spacing:-0.2px">+10</div>
<div style="left:540.5px;width:200px;text-align:right;top:533.0600000000001px;height:12px;font:bold 8px/12px 'Liberation Sans', sans-serif;color:#ffff00;white-space:nowrap;letter-spacing:-0.2px">+0</div>
<div style="left:540.5px;width:200px;text-align:right;top:552.96px;height:12px;font:bold 8px/12px 'Liberation Sans', sans-serif;color:#ffff00;white-space:nowrap;letter-spacing:-0.2px">-10</div>
<div style="left:540.5px;width:200px;text-align:right;top:572.86px;height:12px;font:bold 8px/12px 'Liberation Sans', sans-serif;color:#ffff00;white-space:nowrap;letter-spacing:-0.2px">-20</div>
<div style="left:540.5px;width:200px;text-align:right;top:592.76px;height:12px;font:bold 8px/12px 'Liberation Sans', sans-serif;color:#ffff00;white-space:nowrap;letter-spacing:-0.2px">-30</div>
<div style="left:540.5px;width:200px;text-align:right;top:612.6600000000001px;height:12px;font:bold 8px/12px 'Liberation Sans', sans-serif;color:#ffff00;white-space:nowrap;letter-spacing:-0.2px">-40</div>
<div style="left:691px;top:626px;width:52px;height:39px;background:#a8a8a8;border:1px solid #c8c8c8;border-right-color:#6e6e6e;border-bottom-color:#6e6e6e"></div>
<div style="left:694px;top:629px;width:46px;height:33px;background:linear-gradient(180deg,#00ff00 0%,#7dff7d 50%,#e6ffe6 100%);border:1px solid #7a7a7a"></div>
<div style="left:691.0px;width:52px;text-align:center;top:638.43px;height:16px;font:bold 12px/16px 'Liberation Sans', sans-serif;color:#000;white-space:nowrap;transform:scaleX(0.85)">ON</div>
<div style="left:191px;top:288px;width:1px;height:378px;background:#000"></div></body></html>
